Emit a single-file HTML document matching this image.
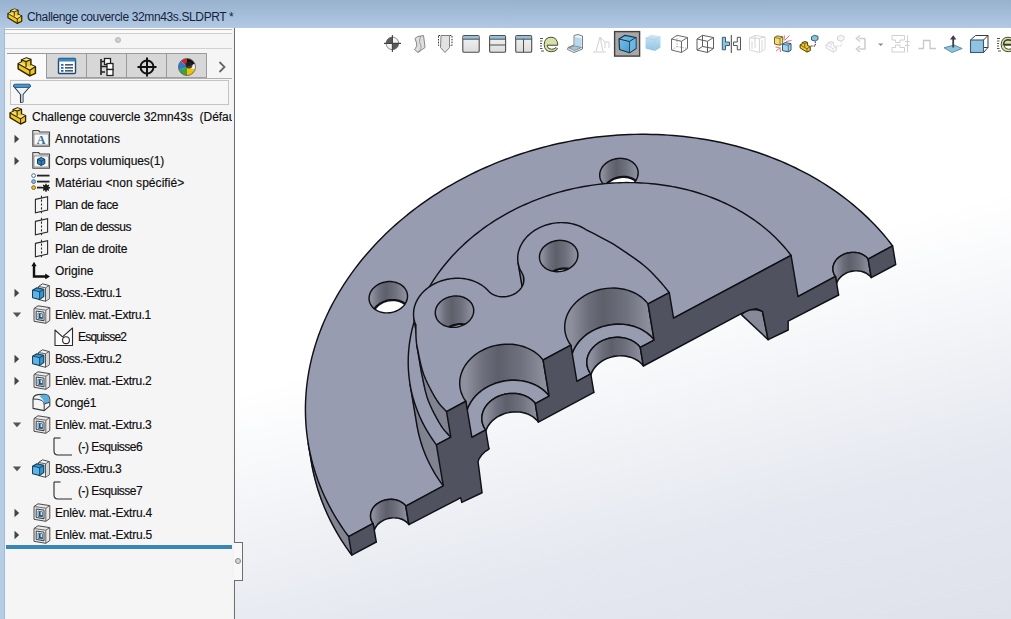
<!DOCTYPE html>
<html><head><meta charset="utf-8"><style>
*{margin:0;padding:0;box-sizing:border-box}
html,body{width:1011px;height:619px;overflow:hidden;background:#fff;font-family:"Liberation Sans", sans-serif}
.abs{position:absolute}
#title{position:absolute;left:0;top:0;width:1011px;height:28px;background:linear-gradient(to bottom,#98b1cd 0%,#a6bfdb 60%,#b3c9e3 100%)}
#title .t{position:absolute;left:27px;top:10px;font-size:12px;line-height:14px;color:#15233d;letter-spacing:-0.37px;white-space:nowrap}
#lstrip{position:absolute;left:0;top:28px;width:5px;height:591px;background:#b7cde6;border-right:1px solid #a4b9d3}
#panel{position:absolute;left:5px;top:29px;width:228px;height:590px;background:#f5f5f5;overflow:hidden}
#vp{position:absolute;left:235px;top:28px;width:776px;height:591px;background:linear-gradient(165.5deg,#ffffff 0%,#ffffff 46%,#f8f9fb 55%,#eff1f5 66%,#e5e8f0 79%,#dfe2eb 100%)}
.tx{position:absolute;font-size:12px;line-height:15px;color:#0c0c0c;white-space:nowrap;-webkit-text-stroke:0.15px #0c0c0c}
.ic{position:absolute;line-height:0}
.ic svg{display:block}
</style></head><body>
<div id="title"><div class="t">Challenge couvercle 32mn43s.SLDPRT *</div>
<div class="ic" style="left:7px;top:7.5px"><svg width="16" height="16.5" viewBox="1 1.2 19 19"><path d="M2.1 7.5 L5.3 6 L5.3 3.9 L10 2.1 L14.2 3.6 L14.2 8.6 L18.5 10.3 L18.5 16.7 L13.2 19.2 L2.1 12.4 Z" fill="#f0c820" stroke="#2e2400" stroke-width="1.4" stroke-linejoin="round"/><path d="M2.6 7.6 L5.3 6.2 L9.6 8.6 L13.2 10.9 L14.2 8.8 L18.2 10.4 L13.2 13.6 Z" fill="#f7e07a"/><path d="M5.6 4 L10 2.4 L14 3.7 L9.6 5.4 Z" fill="#f9e9a0"/><path d="M2.1 7.5 L13.2 13.8 L18.5 10.3 M13.2 13.8 L13.2 19.2 M5.3 3.9 L9.6 5.5 L14.2 3.6 M9.6 5.5 L9.6 10.8" fill="none" stroke="#2e2400" stroke-width="1.1"/></svg></div></div>
<div id="lstrip"></div>
<div id="vp"></div>
<div id="panel">
 <div class="abs" style="left:0;top:-1px;width:227px;height:2px;background:#b9b9b9"></div>
 <div class="abs" style="left:0;top:1px;width:227px;height:4px;background:#fafafa;border-bottom:1px solid #cfcfcf"></div>
 <div class="abs" style="left:0;top:19px;width:227px;height:1px;background:#d2d2d2"></div>
 <div class="abs" style="left:110px;top:8px;width:6px;height:6px;border-radius:50%;background:#d0d0d0;border:1px solid #b5b5b5"></div>
 <div class="abs" style="left:2px;top:25px;width:39px;height:25px;background:#fafafa"></div>
 <div class="abs" style="left:2px;top:24px;width:200px;height:1px;background:#9a9a9a"></div>
 <div class="abs" style="left:41px;top:24px;width:161px;height:25px;background:#d7d7d7;border-top:1px solid #9a9a9a;border-left:1px solid #9a9a9a;border-bottom:1px solid #a0a0a0"></div>
 <div class="abs" style="left:81px;top:25px;width:1px;height:24px;background:#9a9a9a"></div>
 <div class="abs" style="left:121px;top:25px;width:1px;height:24px;background:#9a9a9a"></div>
 <div class="abs" style="left:161px;top:25px;width:1px;height:24px;background:#9a9a9a"></div>
 <div class="abs" style="left:201px;top:25px;width:1px;height:24px;background:#9a9a9a"></div>
 <div class="abs" style="left:41px;top:49px;width:186px;height:1px;background:#b0b0b0"></div>
 <div class="abs" style="left:5px;top:51px;width:219px;height:25px;background:#f7f7f7;border:1px solid #c4c4c4"></div>
 
 <div class="ic" style="left:12px;top:28px"><svg width="20" height="20" viewBox="1 1.2 19 19"><path d="M2.1 7.5 L5.3 6 L5.3 3.9 L10 2.1 L14.2 3.6 L14.2 8.6 L18.5 10.3 L18.5 16.7 L13.2 19.2 L2.1 12.4 Z" fill="#f0c820" stroke="#2e2400" stroke-width="1.4" stroke-linejoin="round"/><path d="M2.6 7.6 L5.3 6.2 L9.6 8.6 L13.2 10.9 L14.2 8.8 L18.2 10.4 L13.2 13.6 Z" fill="#f7e07a"/><path d="M5.6 4 L10 2.4 L14 3.7 L9.6 5.4 Z" fill="#f9e9a0"/><path d="M2.1 7.5 L13.2 13.8 L18.5 10.3 M13.2 13.8 L13.2 19.2 M5.3 3.9 L9.6 5.5 L14.2 3.6 M9.6 5.5 L9.6 10.8" fill="none" stroke="#2e2400" stroke-width="1.1"/></svg></div>
 <div class="ic" style="left:52px;top:28px"><svg width="20" height="18" viewBox="0 0 20 18"><rect x="1.5" y="1.5" width="17" height="15" rx="1" fill="#fff" stroke="#1d4a78" stroke-width="1.4"/><rect x="1.5" y="1.5" width="17" height="3" fill="#3a86c0"/><rect x="4" y="7" width="2.5" height="1.8" fill="#2a6aa8"/><rect x="8" y="7.2" width="8" height="1.3" fill="#1d3550"/><rect x="4" y="10" width="2.5" height="1.8" fill="#2a6aa8"/><rect x="8" y="10.2" width="8" height="1.3" fill="#1d3550"/><rect x="4" y="13" width="2.5" height="1.8" fill="#2a6aa8"/><rect x="8" y="13.2" width="8" height="1.3" fill="#1d3550"/></svg></div>
 <div class="ic" style="left:93px;top:28px"><svg width="18" height="20" viewBox="0 0 18 20"><path d="M3 2 L3 18 M3 4.5 L7 4.5 M3 15 L7 15 M3 9.5 L9 9.5" stroke="#222" stroke-width="1.6" fill="none"/><rect x="6.5" y="1.5" width="6" height="6" fill="#fff" stroke="#222" stroke-width="1.3"/><rect x="9" y="6.5" width="6" height="6" fill="#fff" stroke="#222" stroke-width="1.3"/><rect x="9" y="12.5" width="6" height="6" fill="#fff" stroke="#222" stroke-width="1.3"/></svg></div>
 <div class="ic" style="left:131px;top:27px"><svg width="22" height="22" viewBox="0 0 22 22"><circle cx="11" cy="11" r="6.5" fill="none" stroke="#111" stroke-width="2"/><path d="M11 1.5 L11 20.5 M1.5 11 L20.5 11" stroke="#111" stroke-width="2"/></svg></div>
 <div class="ic" style="left:172px;top:28px"><svg width="20" height="20" viewBox="0 0 20 20"><defs><clipPath id="ball"><circle cx="10" cy="10" r="8.5"/></clipPath></defs><g clip-path="url(#ball)"><rect x="0" y="0" width="20" height="20" fill="#e8e8e8"/><path d="M10 10 L0 0 L10 0 Z" fill="#d2232a"/><path d="M10 10 L10 0 L20 0 L20 6 Z" fill="#111"/><path d="M10 10 L20 6 L20 20 Z" fill="#f3f3f3"/><path d="M10 10 L0 0 L0 14 Z" fill="#2b7ad6"/><path d="M10 10 L0 14 L0 20 L10 20 Z" fill="#3aa33a"/><path d="M10 10 L10 20 L20 20 L20 13 Z" fill="#f2c200"/><circle cx="12" cy="8" r="3.5" fill="#222" opacity="0.85"/></g><circle cx="10" cy="10" r="8.5" fill="none" stroke="#555" stroke-width="0.8"/></svg></div>
 <div class="ic" style="left:212px;top:31px"><svg width="10" height="14" viewBox="0 0 10 14"><path d="M2.5 2 L7.5 7 L2.5 12" fill="none" stroke="#666" stroke-width="1.8"/></svg></div>
 <div class="ic" style="left:7px;top:53px"><svg width="20" height="22" viewBox="0 0 20 22"><path d="M1.5 4 L18.5 4 L11 12.5 L11 20 L8.5 20.5 L8.5 12.5 Z" fill="#eef2f6" stroke="#2a3a48" stroke-width="1.1" stroke-linejoin="round"/><path d="M9 12.5 L9 20 L10.5 20 L10.5 12.5 Z" fill="#c8ccd0"/><rect x="1.5" y="2.2" width="17" height="3.2" rx="1.6" fill="#4a9ad0" stroke="#1d4a78" stroke-width="0.9"/></svg></div>

</div>
<div class="abs" style="left:0;top:0;width:232px;height:619px;overflow:hidden">
<div class="tx" style="left:32px;top:110px;letter-spacing:-0.02px">Challenge couvercle 32mn43s&nbsp; (Défaut</div>
<div class="ic" style="left:9px;top:107px"><svg width="18" height="18" viewBox="1 1.2 19 19"><path d="M2.1 7.5 L5.3 6 L5.3 3.9 L10 2.1 L14.2 3.6 L14.2 8.6 L18.5 10.3 L18.5 16.7 L13.2 19.2 L2.1 12.4 Z" fill="#f0c820" stroke="#2e2400" stroke-width="1.4" stroke-linejoin="round"/><path d="M2.6 7.6 L5.3 6.2 L9.6 8.6 L13.2 10.9 L14.2 8.8 L18.2 10.4 L13.2 13.6 Z" fill="#f7e07a"/><path d="M5.6 4 L10 2.4 L14 3.7 L9.6 5.4 Z" fill="#f9e9a0"/><path d="M2.1 7.5 L13.2 13.8 L18.5 10.3 M13.2 13.8 L13.2 19.2 M5.3 3.9 L9.6 5.5 L14.2 3.6 M9.6 5.5 L9.6 10.8" fill="none" stroke="#2e2400" stroke-width="1.1"/></svg></div>
<div class="tx" style="left:55px;top:132px;letter-spacing:0.16px">Annotations</div>
<div class="ic" style="left:32px;top:129px"><svg width="19" height="18" viewBox="0 0 19 18"><path d="M0.8 1.5 L6.5 1.5 L8 3 L17.5 3 L17.5 17.2 L0.8 17.2 Z" fill="#dcdcdc" stroke="#4a4a4a" stroke-width="1.1" stroke-linejoin="round"/><rect x="2" y="5" width="14.3" height="11" fill="#f7f9fb" stroke="#7a7a7a" stroke-width="0.7"/><text x="9.2" y="15" font-family="Liberation Serif" font-size="12" font-weight="bold" fill="#3a6a94" text-anchor="middle">A</text></svg></div>
<div class="ic" style="left:13px;top:134px"><svg width="8" height="10" viewBox="0 0 8 10"><path d="M1.5 0.8 L6.2 5 L1.5 9.2 Z" fill="#444"/></svg></div>
<div class="tx" style="left:55px;top:154px;letter-spacing:-0.08px">Corps volumiques(1)</div>
<div class="ic" style="left:32px;top:151px"><svg width="19" height="18" viewBox="0 0 19 18"><path d="M0.8 1.5 L6.5 1.5 L8 3 L17.5 3 L17.5 17.2 L0.8 17.2 Z" fill="#dcdcdc" stroke="#4a4a4a" stroke-width="1.1" stroke-linejoin="round"/><rect x="2" y="5" width="14.3" height="11" fill="#f7f9fb" stroke="#7a7a7a" stroke-width="0.7"/><path d="M5.5 8.3 L9.2 6.5 L12.8 8.3 L12.8 12.6 L9.2 14.5 L5.5 12.6 Z" fill="#2a88be" stroke="#173650" stroke-width="1"/><path d="M5.5 8.3 L9.2 10.1 L12.8 8.3 M9.2 10.1 L9.2 14.5" fill="none" stroke="#173650" stroke-width="0.8"/></svg></div>
<div class="ic" style="left:13px;top:156px"><svg width="8" height="10" viewBox="0 0 8 10"><path d="M1.5 0.8 L6.2 5 L1.5 9.2 Z" fill="#444"/></svg></div>
<div class="tx" style="left:55px;top:176px;letter-spacing:0.05px">Matériau &lt;non spécifié&gt;</div>
<div class="ic" style="left:31px;top:173px"><svg width="20" height="19" viewBox="0 0 20 19"><circle cx="2.6" cy="2.6" r="1.9" fill="#fff" stroke="#355f8a" stroke-width="0.9"/><rect x="6" y="1.7" width="12.5" height="1.8" fill="#222"/><circle cx="2.6" cy="8.6" r="1.9" fill="#8fbde6" stroke="#355f8a" stroke-width="0.9"/><rect x="6" y="7.7" width="12.5" height="1.8" fill="#222"/><circle cx="2.6" cy="14.6" r="1.9" fill="#f0c030" stroke="#7a5a00" stroke-width="0.9"/><rect x="6" y="13.7" width="5" height="1.8" fill="#222"/><circle cx="15" cy="14.8" r="2.7" fill="#1a1a1a"/><circle cx="15" cy="14.8" r="0.9" fill="#f5f5f5"/><path d="M15 10.8 L15 18.8 M11 14.8 L19 14.8 M12.2 12 L17.8 17.6 M17.8 12 L12.2 17.6" stroke="#1a1a1a" stroke-width="1.4"/></svg></div>
<div class="tx" style="left:55px;top:198px;letter-spacing:-0.29px">Plan de face</div>
<div class="ic" style="left:32px;top:195px"><svg width="18" height="19" viewBox="0 0 18 19"><path d="M3.4 4.4 L15.6 1.6 L15.6 15 L3.4 17.9 Z" fill="none" stroke="#2a2a2a" stroke-width="1.1"/><path d="M9.5 0.8 L9.5 18.6" stroke="#2a2a2a" stroke-width="1.1" stroke-dasharray="2.2 1.6"/></svg></div>
<div class="tx" style="left:55px;top:220px;letter-spacing:-0.42px">Plan de dessus</div>
<div class="ic" style="left:32px;top:217px"><svg width="18" height="19" viewBox="0 0 18 19"><path d="M3.4 4.4 L15.6 1.6 L15.6 15 L3.4 17.9 Z" fill="none" stroke="#2a2a2a" stroke-width="1.1"/><path d="M9.5 0.8 L9.5 18.6" stroke="#2a2a2a" stroke-width="1.1" stroke-dasharray="2.2 1.6"/></svg></div>
<div class="tx" style="left:55px;top:242px;letter-spacing:-0.12px">Plan de droite</div>
<div class="ic" style="left:32px;top:239px"><svg width="18" height="19" viewBox="0 0 18 19"><path d="M3.4 4.4 L15.6 1.6 L15.6 15 L3.4 17.9 Z" fill="none" stroke="#2a2a2a" stroke-width="1.1"/><path d="M9.5 0.8 L9.5 18.6" stroke="#2a2a2a" stroke-width="1.1" stroke-dasharray="2.2 1.6"/></svg></div>
<div class="tx" style="left:55px;top:264px;letter-spacing:-0.03px">Origine</div>
<div class="ic" style="left:31px;top:261px"><svg width="20" height="18" viewBox="0 0 20 18"><path d="M3 4 L3 15.5 L15.5 15.5" fill="none" stroke="#111" stroke-width="2.4"/><path d="M0.4 5.2 L3 0.8 L5.6 5.2 Z M14.2 12.6 L19 15.5 L14.2 18.4 Z" fill="#111"/></svg></div>
<div class="tx" style="left:55px;top:286px;letter-spacing:-0.45px">Boss.-Extru.1</div>
<div class="ic" style="left:32px;top:283px"><svg width="19" height="19" viewBox="0 0 19 19"><path d="M6.5 3.5 L10.5 0.8 L17.3 2.6 L17.3 15.8 L13.5 18.3 L6.5 16.5 Z" fill="#f3f3f3" stroke="#4a4a4a" stroke-width="1"/><path d="M13.5 4.8 L13.5 18.3 M6.5 3.5 L13.5 4.8 L17.3 2.6" fill="none" stroke="#4a4a4a" stroke-width="0.9"/><path d="M14 5.3 L16.8 3.4 L16.8 15.5 L14 17.5 Z" fill="#d8d8d8"/><path d="M0.6 7.2 L4.8 4.8 L11.8 6.3 L11.8 13.6 L7.6 16.4 L0.6 14.6 Z" fill="#2e98d2" stroke="#183a55" stroke-width="1.1" stroke-linejoin="round"/><path d="M0.6 7.2 L7.6 8.8 L11.8 6.3 M7.6 8.8 L7.6 16.4" fill="none" stroke="#183a55" stroke-width="0.9"/><path d="M1.1 7.8 L7.1 9.2 L7.1 15.7 L1.1 14.2 Z" fill="#5bb6e6"/></svg></div>
<div class="ic" style="left:13px;top:288px"><svg width="8" height="10" viewBox="0 0 8 10"><path d="M1.5 0.8 L6.2 5 L1.5 9.2 Z" fill="#444"/></svg></div>
<div class="tx" style="left:55px;top:308px;letter-spacing:-0.28px">Enlèv. mat.-Extru.1</div>
<div class="ic" style="left:33px;top:305px"><svg width="18" height="19" viewBox="0 0 18 19"><path d="M1 3.5 L5 0.8 L16.8 2.6 L16.8 15.5 L12.8 18.3 L1 16.3 Z" fill="#e9e9e9" stroke="#4a4a4a" stroke-width="1"/><path d="M1 3.5 L12.8 5.2 L16.8 2.6 M12.8 5.2 L12.8 18.3" fill="none" stroke="#5a5a5a" stroke-width="0.9"/><path d="M3.2 6 L11 7.2 L11 15.8 L3.2 14.4 Z" fill="#fbfbfb" stroke="#3a3a3a" stroke-width="1"/><path d="M5 8 L9.5 8.8 L9.5 14.2 L5 13.4 Z" fill="#cfe6f4" stroke="#2a6aa0" stroke-width="0.8"/><path d="M6.8 8.6 L6.8 12.6 L9.3 13" fill="none" stroke="#173a60" stroke-width="1.4"/></svg></div>
<div class="ic" style="left:12px;top:311px"><svg width="10" height="8" viewBox="0 0 10 8"><path d="M0.8 1.5 L9.2 1.5 L5 6.2 Z" fill="#555"/></svg></div>
<div class="tx" style="left:78px;top:330px;letter-spacing:-0.80px">Esquisse2</div>
<div class="ic" style="left:54px;top:327px"><svg width="20" height="19" viewBox="0 0 20 19"><path d="M1 3 L8.5 9.8 L18.5 1 L18.5 18.5 L1 18.5 Z" fill="#fff" stroke="#2a2a2a" stroke-width="1.1" stroke-linejoin="round"/><circle cx="12" cy="13.2" r="3.4" fill="#fff" stroke="#2a2a2a" stroke-width="1.1"/></svg></div>
<div class="tx" style="left:55px;top:352px;letter-spacing:-0.45px">Boss.-Extru.2</div>
<div class="ic" style="left:32px;top:349px"><svg width="19" height="19" viewBox="0 0 19 19"><path d="M6.5 3.5 L10.5 0.8 L17.3 2.6 L17.3 15.8 L13.5 18.3 L6.5 16.5 Z" fill="#f3f3f3" stroke="#4a4a4a" stroke-width="1"/><path d="M13.5 4.8 L13.5 18.3 M6.5 3.5 L13.5 4.8 L17.3 2.6" fill="none" stroke="#4a4a4a" stroke-width="0.9"/><path d="M14 5.3 L16.8 3.4 L16.8 15.5 L14 17.5 Z" fill="#d8d8d8"/><path d="M0.6 7.2 L4.8 4.8 L11.8 6.3 L11.8 13.6 L7.6 16.4 L0.6 14.6 Z" fill="#2e98d2" stroke="#183a55" stroke-width="1.1" stroke-linejoin="round"/><path d="M0.6 7.2 L7.6 8.8 L11.8 6.3 M7.6 8.8 L7.6 16.4" fill="none" stroke="#183a55" stroke-width="0.9"/><path d="M1.1 7.8 L7.1 9.2 L7.1 15.7 L1.1 14.2 Z" fill="#5bb6e6"/></svg></div>
<div class="ic" style="left:13px;top:354px"><svg width="8" height="10" viewBox="0 0 8 10"><path d="M1.5 0.8 L6.2 5 L1.5 9.2 Z" fill="#444"/></svg></div>
<div class="tx" style="left:55px;top:374px;letter-spacing:-0.25px">Enlèv. mat.-Extru.2</div>
<div class="ic" style="left:33px;top:371px"><svg width="18" height="19" viewBox="0 0 18 19"><path d="M1 3.5 L5 0.8 L16.8 2.6 L16.8 15.5 L12.8 18.3 L1 16.3 Z" fill="#e9e9e9" stroke="#4a4a4a" stroke-width="1"/><path d="M1 3.5 L12.8 5.2 L16.8 2.6 M12.8 5.2 L12.8 18.3" fill="none" stroke="#5a5a5a" stroke-width="0.9"/><path d="M3.2 6 L11 7.2 L11 15.8 L3.2 14.4 Z" fill="#fbfbfb" stroke="#3a3a3a" stroke-width="1"/><path d="M5 8 L9.5 8.8 L9.5 14.2 L5 13.4 Z" fill="#cfe6f4" stroke="#2a6aa0" stroke-width="0.8"/><path d="M6.8 8.6 L6.8 12.6 L9.3 13" fill="none" stroke="#173a60" stroke-width="1.4"/></svg></div>
<div class="ic" style="left:13px;top:376px"><svg width="8" height="10" viewBox="0 0 8 10"><path d="M1.5 0.8 L6.2 5 L1.5 9.2 Z" fill="#444"/></svg></div>
<div class="tx" style="left:55px;top:396px;letter-spacing:-0.10px">Congé1</div>
<div class="ic" style="left:32px;top:393px"><svg width="19" height="19" viewBox="0 0 19 19"><path d="M1 6 Q1.5 2.2 6 1.6 L12.5 1.2 Q17.3 1.6 17.8 6.2 L17.8 12.8 L12.2 17.6 L1 15.4 Z" fill="#f2f4f6" stroke="#3a3a3a" stroke-width="1.1" stroke-linejoin="round"/><path d="M7.5 3.2 Q8.5 1.8 12.5 1.6 Q16.8 1.9 17.4 6 L17.4 9 L12.4 10.8 Q12.2 6.5 7.5 3.2 Z" fill="#5aaee0"/><path d="M1 6 Q6.5 5.8 10 7.5 Q12.2 9 12.2 12 L12.2 17.6 M12.2 11 L17.8 9.2" fill="none" stroke="#3a3a3a" stroke-width="1"/></svg></div>
<div class="tx" style="left:55px;top:418px;letter-spacing:-0.25px">Enlèv. mat.-Extru.3</div>
<div class="ic" style="left:33px;top:415px"><svg width="18" height="19" viewBox="0 0 18 19"><path d="M1 3.5 L5 0.8 L16.8 2.6 L16.8 15.5 L12.8 18.3 L1 16.3 Z" fill="#e9e9e9" stroke="#4a4a4a" stroke-width="1"/><path d="M1 3.5 L12.8 5.2 L16.8 2.6 M12.8 5.2 L12.8 18.3" fill="none" stroke="#5a5a5a" stroke-width="0.9"/><path d="M3.2 6 L11 7.2 L11 15.8 L3.2 14.4 Z" fill="#fbfbfb" stroke="#3a3a3a" stroke-width="1"/><path d="M5 8 L9.5 8.8 L9.5 14.2 L5 13.4 Z" fill="#cfe6f4" stroke="#2a6aa0" stroke-width="0.8"/><path d="M6.8 8.6 L6.8 12.6 L9.3 13" fill="none" stroke="#173a60" stroke-width="1.4"/></svg></div>
<div class="ic" style="left:12px;top:421px"><svg width="10" height="8" viewBox="0 0 10 8"><path d="M0.8 1.5 L9.2 1.5 L5 6.2 Z" fill="#555"/></svg></div>
<div class="tx" style="left:78px;top:440px;letter-spacing:-0.50px">(-) Esquisse6</div>
<div class="ic" style="left:53px;top:437px"><svg width="20" height="19" viewBox="0 0 20 19"><path d="M1 1 L1 14 Q1 18 5 18 L19 18" fill="none" stroke="#2a2a2a" stroke-width="1.1"/><path d="M1 1 L7.5 1" fill="none" stroke="#2a2a2a" stroke-width="1.1"/></svg></div>
<div class="tx" style="left:55px;top:462px;letter-spacing:-0.45px">Boss.-Extru.3</div>
<div class="ic" style="left:32px;top:459px"><svg width="19" height="19" viewBox="0 0 19 19"><path d="M6.5 3.5 L10.5 0.8 L17.3 2.6 L17.3 15.8 L13.5 18.3 L6.5 16.5 Z" fill="#f3f3f3" stroke="#4a4a4a" stroke-width="1"/><path d="M13.5 4.8 L13.5 18.3 M6.5 3.5 L13.5 4.8 L17.3 2.6" fill="none" stroke="#4a4a4a" stroke-width="0.9"/><path d="M14 5.3 L16.8 3.4 L16.8 15.5 L14 17.5 Z" fill="#d8d8d8"/><path d="M0.6 7.2 L4.8 4.8 L11.8 6.3 L11.8 13.6 L7.6 16.4 L0.6 14.6 Z" fill="#2e98d2" stroke="#183a55" stroke-width="1.1" stroke-linejoin="round"/><path d="M0.6 7.2 L7.6 8.8 L11.8 6.3 M7.6 8.8 L7.6 16.4" fill="none" stroke="#183a55" stroke-width="0.9"/><path d="M1.1 7.8 L7.1 9.2 L7.1 15.7 L1.1 14.2 Z" fill="#5bb6e6"/></svg></div>
<div class="ic" style="left:12px;top:465px"><svg width="10" height="8" viewBox="0 0 10 8"><path d="M0.8 1.5 L9.2 1.5 L5 6.2 Z" fill="#555"/></svg></div>
<div class="tx" style="left:78px;top:484px;letter-spacing:-0.50px">(-) Esquisse7</div>
<div class="ic" style="left:53px;top:481px"><svg width="20" height="19" viewBox="0 0 20 19"><path d="M1 1 L1 14 Q1 18 5 18 L19 18" fill="none" stroke="#2a2a2a" stroke-width="1.1"/><path d="M1 1 L7.5 1" fill="none" stroke="#2a2a2a" stroke-width="1.1"/></svg></div>
<div class="tx" style="left:55px;top:506px;letter-spacing:-0.22px">Enlèv. mat.-Extru.4</div>
<div class="ic" style="left:33px;top:503px"><svg width="18" height="19" viewBox="0 0 18 19"><path d="M1 3.5 L5 0.8 L16.8 2.6 L16.8 15.5 L12.8 18.3 L1 16.3 Z" fill="#e9e9e9" stroke="#4a4a4a" stroke-width="1"/><path d="M1 3.5 L12.8 5.2 L16.8 2.6 M12.8 5.2 L12.8 18.3" fill="none" stroke="#5a5a5a" stroke-width="0.9"/><path d="M3.2 6 L11 7.2 L11 15.8 L3.2 14.4 Z" fill="#fbfbfb" stroke="#3a3a3a" stroke-width="1"/><path d="M5 8 L9.5 8.8 L9.5 14.2 L5 13.4 Z" fill="#cfe6f4" stroke="#2a6aa0" stroke-width="0.8"/><path d="M6.8 8.6 L6.8 12.6 L9.3 13" fill="none" stroke="#173a60" stroke-width="1.4"/></svg></div>
<div class="ic" style="left:13px;top:508px"><svg width="8" height="10" viewBox="0 0 8 10"><path d="M1.5 0.8 L6.2 5 L1.5 9.2 Z" fill="#444"/></svg></div>
<div class="tx" style="left:55px;top:528px;letter-spacing:-0.22px">Enlèv. mat.-Extru.5</div>
<div class="ic" style="left:33px;top:525px"><svg width="18" height="19" viewBox="0 0 18 19"><path d="M1 3.5 L5 0.8 L16.8 2.6 L16.8 15.5 L12.8 18.3 L1 16.3 Z" fill="#e9e9e9" stroke="#4a4a4a" stroke-width="1"/><path d="M1 3.5 L12.8 5.2 L16.8 2.6 M12.8 5.2 L12.8 18.3" fill="none" stroke="#5a5a5a" stroke-width="0.9"/><path d="M3.2 6 L11 7.2 L11 15.8 L3.2 14.4 Z" fill="#fbfbfb" stroke="#3a3a3a" stroke-width="1"/><path d="M5 8 L9.5 8.8 L9.5 14.2 L5 13.4 Z" fill="#cfe6f4" stroke="#2a6aa0" stroke-width="0.8"/><path d="M6.8 8.6 L6.8 12.6 L9.3 13" fill="none" stroke="#173a60" stroke-width="1.4"/></svg></div>
<div class="ic" style="left:13px;top:530px"><svg width="8" height="10" viewBox="0 0 8 10"><path d="M1.5 0.8 L6.2 5 L1.5 9.2 Z" fill="#444"/></svg></div>
</div>
<div class="abs" style="left:6px;top:545px;width:226px;height:4px;background:#3b86b8"></div>
<div class="abs" style="left:232px;top:28px;width:2px;height:591px;background:#f3f3f3"></div><div class="abs" style="left:234px;top:28px;width:1px;height:591px;background:#6e6e6e"></div>
<div class="abs" style="left:234px;top:542px;width:9px;height:39px;background:#f8f8f8;border:1px solid #6e6e6e;border-left:none"></div>
<div class="abs" style="left:235px;top:558px;width:6px;height:6px;border-radius:50%;background:#d4d4d4;border:1px solid #8a8a8a"></div>
<svg class="abs" style="left:0;top:0" width="1011" height="619" viewBox="0 0 1011 619">
<defs><linearGradient id="bg" gradientUnits="userSpaceOnUse" x1="527.2" y1="-46.6" x2="718.8" y2="694.6"><stop offset="0" stop-color="#ffffff"/><stop offset="0.46" stop-color="#ffffff"/><stop offset="0.55" stop-color="#f8f9fb"/><stop offset="0.66" stop-color="#eff1f5"/><stop offset="0.79" stop-color="#e5e8f0"/><stop offset="1" stop-color="#dfe2eb"/></linearGradient>
<linearGradient id="holeg_bh0" gradientUnits="userSpaceOnUse" x1="602.3" y1="0" x2="635.5" y2="0"><stop offset="0" stop-color="#8e909e"/><stop offset="0.22" stop-color="#6d6f7c"/><stop offset="0.42" stop-color="#5d5f6b"/><stop offset="0.72" stop-color="#6f717e"/><stop offset="1" stop-color="#8c8e9c"/></linearGradient>
<linearGradient id="holeg_bh1" gradientUnits="userSpaceOnUse" x1="371.7" y1="0" x2="404.9" y2="0"><stop offset="0" stop-color="#8e909e"/><stop offset="0.22" stop-color="#6d6f7c"/><stop offset="0.42" stop-color="#5d5f6b"/><stop offset="0.72" stop-color="#6f717e"/><stop offset="1" stop-color="#8c8e9c"/></linearGradient>
<linearGradient id="holeg_sl0" gradientUnits="userSpaceOnUse" x1="373.1" y1="0" x2="405.8" y2="0"><stop offset="0" stop-color="#8e909e"/><stop offset="0.22" stop-color="#6d6f7c"/><stop offset="0.42" stop-color="#5d5f6b"/><stop offset="0.72" stop-color="#6f717e"/><stop offset="1" stop-color="#8c8e9c"/></linearGradient>
<linearGradient id="holeg_sl1" gradientUnits="userSpaceOnUse" x1="835.5" y1="0" x2="868.1" y2="0"><stop offset="0" stop-color="#8e909e"/><stop offset="0.22" stop-color="#6d6f7c"/><stop offset="0.42" stop-color="#5d5f6b"/><stop offset="0.72" stop-color="#6f717e"/><stop offset="1" stop-color="#8c8e9c"/></linearGradient>
<linearGradient id="holeg_sh0" gradientUnits="userSpaceOnUse" x1="437.9" y1="0" x2="471.1" y2="0"><stop offset="0" stop-color="#8e909e"/><stop offset="0.22" stop-color="#6d6f7c"/><stop offset="0.42" stop-color="#5d5f6b"/><stop offset="0.72" stop-color="#6f717e"/><stop offset="1" stop-color="#8c8e9c"/></linearGradient>
<linearGradient id="holeg_sh1" gradientUnits="userSpaceOnUse" x1="542.1" y1="0" x2="575.3" y2="0"><stop offset="0" stop-color="#8e909e"/><stop offset="0.22" stop-color="#6d6f7c"/><stop offset="0.42" stop-color="#5d5f6b"/><stop offset="0.72" stop-color="#6f717e"/><stop offset="1" stop-color="#8c8e9c"/></linearGradient>
<linearGradient id="holeg_cu0" gradientUnits="userSpaceOnUse" x1="465.8" y1="0" x2="543.1" y2="0"><stop offset="0" stop-color="#8e909e"/><stop offset="0.22" stop-color="#6d6f7c"/><stop offset="0.42" stop-color="#5d5f6b"/><stop offset="0.72" stop-color="#6f717e"/><stop offset="1" stop-color="#8c8e9c"/></linearGradient>
<linearGradient id="holeg_ct0" gradientUnits="userSpaceOnUse" x1="485.8" y1="0" x2="535.3" y2="0"><stop offset="0" stop-color="#8e909e"/><stop offset="0.22" stop-color="#6d6f7c"/><stop offset="0.42" stop-color="#5d5f6b"/><stop offset="0.72" stop-color="#6f717e"/><stop offset="1" stop-color="#8c8e9c"/></linearGradient>
<linearGradient id="holeg_cu1" gradientUnits="userSpaceOnUse" x1="570.8" y1="0" x2="648.1" y2="0"><stop offset="0" stop-color="#8e909e"/><stop offset="0.22" stop-color="#6d6f7c"/><stop offset="0.42" stop-color="#5d5f6b"/><stop offset="0.72" stop-color="#6f717e"/><stop offset="1" stop-color="#8c8e9c"/></linearGradient>
<linearGradient id="holeg_ct1" gradientUnits="userSpaceOnUse" x1="590.8" y1="0" x2="640.3" y2="0"><stop offset="0" stop-color="#8e909e"/><stop offset="0.22" stop-color="#6d6f7c"/><stop offset="0.42" stop-color="#5d5f6b"/><stop offset="0.72" stop-color="#6f717e"/><stop offset="1" stop-color="#8c8e9c"/></linearGradient></defs>
<path d="M308.01 442.18 L308.76 446.57 L311.87 465.10 L311.12 460.71 Z" fill="#7a7c8a" stroke="#7a7c8a" stroke-width="0.7"/>
<path d="M308.76 446.57 L309.61 450.94 L312.72 469.47 L311.87 465.10 Z" fill="#7b7d8a" stroke="#7b7d8a" stroke-width="0.7"/>
<path d="M309.61 450.94 L310.55 455.29 L313.66 473.82 L312.72 469.47 Z" fill="#7c7d8b" stroke="#7c7d8b" stroke-width="0.7"/>
<path d="M310.55 455.29 L311.59 459.63 L314.70 478.16 L313.66 473.82 Z" fill="#7c7e8b" stroke="#7c7e8b" stroke-width="0.7"/>
<path d="M311.59 459.63 L312.72 463.94 L315.83 482.47 L314.70 478.16 Z" fill="#7d7f8c" stroke="#7d7f8c" stroke-width="0.7"/>
<path d="M312.72 463.94 L313.95 468.23 L317.06 486.76 L315.83 482.47 Z" fill="#7d7f8d" stroke="#7d7f8d" stroke-width="0.7"/>
<path d="M313.95 468.23 L315.26 472.49 L318.37 491.02 L317.06 486.76 Z" fill="#7e808d" stroke="#7e808d" stroke-width="0.7"/>
<path d="M315.26 472.49 L316.68 476.74 L319.79 495.27 L318.37 491.02 Z" fill="#7e808e" stroke="#7e808e" stroke-width="0.7"/>
<path d="M316.68 476.74 L318.18 480.95 L321.29 499.48 L319.79 495.27 Z" fill="#7e808e" stroke="#7e808e" stroke-width="0.7"/>
<path d="M318.18 480.95 L319.78 485.14 L322.89 503.67 L321.29 499.48 Z" fill="#7f818f" stroke="#7f818f" stroke-width="0.7"/>
<path d="M319.78 485.14 L321.46 489.30 L324.57 507.83 L322.89 503.67 Z" fill="#7f818f" stroke="#7f818f" stroke-width="0.7"/>
<path d="M321.46 489.30 L323.24 493.43 L326.35 511.96 L324.57 507.83 Z" fill="#80828f" stroke="#80828f" stroke-width="0.7"/>
<path d="M323.24 493.43 L325.11 497.53 L328.22 516.06 L326.35 511.96 Z" fill="#808290" stroke="#808290" stroke-width="0.7"/>
<path d="M325.11 497.53 L327.07 501.60 L330.18 520.13 L328.22 516.06 Z" fill="#808290" stroke="#808290" stroke-width="0.7"/>
<path d="M327.07 501.60 L329.12 505.63 L332.23 524.16 L330.18 520.13 Z" fill="#808290" stroke="#808290" stroke-width="0.7"/>
<path d="M329.12 505.63 L331.26 509.63 L334.37 528.16 L332.23 524.16 Z" fill="#818391" stroke="#818391" stroke-width="0.7"/>
<path d="M331.26 509.63 L333.48 513.59 L336.59 532.12 L334.37 528.16 Z" fill="#818391" stroke="#818391" stroke-width="0.7"/>
<path d="M333.48 513.59 L335.80 517.51 L338.91 536.04 L336.59 532.12 Z" fill="#818391" stroke="#818391" stroke-width="0.7"/>
<path d="M335.80 517.51 L338.20 521.40 L341.31 539.93 L338.91 536.04 Z" fill="#818391" stroke="#818391" stroke-width="0.7"/>
<path d="M338.20 521.40 L340.68 525.25 L343.79 543.78 L341.31 539.93 Z" fill="#818391" stroke="#818391" stroke-width="0.7"/>
<path d="M340.68 525.25 L343.25 529.05 L346.36 547.58 L343.79 543.78 Z" fill="#818391" stroke="#818391" stroke-width="0.7"/>
<path d="M343.25 529.05 L345.91 532.82 L349.02 551.35 L346.36 547.58 Z" fill="#818392" stroke="#818392" stroke-width="0.7"/>
<path d="M345.91 532.82 L348.65 536.54 L351.76 555.07 L349.02 551.35 Z" fill="#818392" stroke="#818392" stroke-width="0.7"/>
<path d="M308.25 443.63 L311.36 462.16 L311.94 465.47 L312.58 468.78 L313.27 472.07 L314.02 475.35 L314.82 478.62 L315.67 481.88 L316.58 485.13 L317.54 488.36 L318.55 491.58 L319.62 494.79 L320.74 497.98 L321.91 501.15 L323.14 504.31 L324.42 507.45 L325.75 510.58 L327.13 513.69 L328.56 516.78 L330.05 519.85 L331.58 522.90 L333.17 525.94 L334.80 528.95 L336.49 531.94 L338.23 534.91 L340.01 537.86 L341.85 540.79 L343.74 543.69 L345.67 546.57 L347.65 549.43 L349.68 552.26 L351.76 555.07 L351.76 555.07" fill="none" stroke="#101016" stroke-width="1.45" stroke-linejoin="round" stroke-linecap="round"/>
<path d="M892.62 245.97 L889.80 242.29 L886.89 238.66 L883.91 235.07 L880.84 231.54 L877.70 228.05 L874.47 224.61 L871.17 221.22 L867.80 217.89 L864.34 214.60 L860.82 211.37 L857.22 208.20 L853.55 205.08 L849.80 202.02 L845.99 199.01 L842.11 196.07 L838.16 193.18 L834.15 190.35 L830.07 187.59 L825.92 184.89 L821.72 182.25 L817.45 179.67 L813.12 177.16 L808.74 174.71 L804.29 172.33 L799.79 170.02 L795.24 167.77 L790.63 165.59 L785.98 163.48 L781.27 161.44 L776.51 159.47 L771.70 157.57 L766.85 155.74 L761.96 153.98 L757.02 152.30 L752.04 150.69 L747.01 149.15 L741.96 147.68 L736.86 146.29 L731.73 144.98 L726.56 143.74 L721.37 142.57 L716.14 141.48 L710.88 140.47 L705.59 139.53 L700.28 138.67 L694.95 137.88 L689.59 137.18 L684.21 136.55 L678.81 136.00 L673.40 135.52 L667.97 135.13 L662.52 134.81 L657.06 134.57 L651.59 134.41 L646.11 134.32 L640.63 134.32 L635.13 134.39 L629.63 134.54 L624.13 134.77 L618.63 135.08 L613.13 135.46 L607.63 135.93 L602.14 136.47 L596.65 137.09 L591.17 137.78 L585.69 138.56 L580.23 139.41 L574.78 140.33 L569.35 141.34 L563.93 142.42 L558.52 143.57 L553.14 144.80 L547.77 146.11 L542.43 147.49 L537.12 148.95 L531.82 150.48 L526.56 152.08 L521.32 153.75 L516.12 155.50 L510.94 157.32 L505.80 159.21 L500.70 161.17 L495.63 163.20 L490.59 165.30 L485.60 167.47 L480.65 169.71 L475.74 172.01 L470.88 174.39 L466.06 176.82 L461.29 179.33 L456.57 181.90 L451.90 184.53 L447.28 187.22 L442.71 189.98 L438.19 192.80 L433.73 195.68 L429.33 198.61 L424.99 201.61 L420.71 204.66 L416.48 207.78 L412.32 210.94 L408.23 214.17 L404.19 217.44 L400.23 220.77 L396.33 224.15 L392.50 227.58 L388.73 231.07 L385.04 234.60 L381.42 238.17 L377.88 241.80 L374.40 245.47 L371.01 249.18 L367.69 252.94 L364.44 256.74 L361.28 260.58 L358.19 264.46 L355.18 268.38 L352.25 272.34 L349.41 276.33 L346.65 280.36 L343.97 284.42 L341.37 288.52 L338.86 292.65 L336.44 296.80 L334.10 300.99 L331.85 305.20 L329.69 309.44 L327.62 313.70 L325.64 317.99 L323.74 322.30 L321.94 326.63 L320.23 330.98 L318.61 335.34 L317.08 339.73 L315.64 344.13 L314.30 348.55 L313.05 352.97 L311.89 357.41 L310.83 361.87 L309.86 366.32 L308.98 370.79 L308.21 375.26 L307.52 379.74 L306.93 384.22 L306.44 388.71 L306.05 393.19 L305.74 397.68 L305.54 402.16 L305.43 406.64 L305.42 411.11 L305.50 415.58 L305.68 420.04 L305.95 424.49 L306.32 428.93 L306.79 433.36 L307.35 437.78 L308.01 442.18 L308.76 446.57 L309.61 450.94 L310.55 455.29 L311.59 459.63 L312.72 463.94 L313.95 468.23 L315.26 472.49 L316.68 476.74 L318.18 480.95 L319.78 485.14 L321.46 489.30 L323.24 493.43 L325.11 497.53 L327.07 501.60 L329.12 505.63 L331.26 509.63 L333.48 513.59 L335.80 517.51 L338.20 521.40 L340.68 525.25 L343.25 529.05 L345.91 532.82 L348.65 536.54 L373.13 523.46 L372.22 522.08 L371.50 520.63 L370.97 519.10 L370.65 517.54 L370.53 515.94 L370.62 514.32 L370.92 512.71 L371.42 511.13 L372.12 509.58 L373.01 508.09 L374.08 506.67 L375.31 505.34 L376.70 504.12 L378.23 503.01 L379.89 502.03 L381.64 501.19 L383.49 500.49 L385.40 499.96 L387.35 499.58 L389.33 499.37 L391.30 499.33 L393.26 499.46 L395.18 499.76 L397.03 500.22 L398.80 500.84 L400.47 501.61 L402.01 502.52 L403.42 503.57 L404.68 504.75 L405.77 506.03 L835.50 276.48 L834.59 275.10 L833.87 273.64 L833.35 272.12 L833.02 270.55 L832.91 268.95 L833.00 267.34 L833.30 265.73 L833.80 264.14 L834.49 262.60 L835.38 261.11 L836.45 259.69 L837.68 258.36 L839.08 257.13 L840.61 256.02 L842.26 255.04 L844.02 254.20 L845.86 253.51 L847.77 252.97 L849.72 252.60 L851.70 252.39 L853.68 252.35 L855.64 252.48 L857.55 252.77 L859.40 253.23 L861.17 253.85 L862.84 254.62 L864.39 255.54 L865.80 256.59 L867.05 257.76 L868.14 259.04 Z" fill="#989cb0" stroke="#101016" stroke-width="1.45" stroke-linejoin="round"/>
<path d="M635.53 165.15 L634.81 164.27 L634.01 163.44 L633.14 162.66 L632.21 161.93 L631.20 161.27 L630.14 160.66 L629.02 160.12 L627.86 159.65 L626.65 159.25 L625.40 158.92 L624.12 158.66 L622.81 158.48 L621.49 158.37 L620.16 158.34 L618.81 158.39 L617.47 158.51 L616.14 158.71 L614.82 158.98 L613.52 159.33 L612.24 159.75 L611.00 160.23 L609.80 160.79 L608.64 161.41 L607.54 162.09 L606.48 162.82 L605.49 163.62 L604.57 164.46 L603.71 165.35 L602.93 166.28 L602.22 167.25 L601.60 168.25 L601.06 169.29 L600.61 170.34 L600.25 171.41 L599.98 172.50 L599.80 173.59 L599.72 174.68 L599.72 175.77 L599.83 176.85 L600.02 177.92 L600.31 178.97 L600.69 180.00 L601.15 180.99 L601.71 181.96 L602.34 182.88 L603.06 183.76 L603.86 184.59 L604.73 185.37 L605.67 186.10 L606.67 186.77 L607.73 187.37 L608.85 187.91 L610.02 188.38 L611.23 188.78 L612.47 189.11 L613.75 189.37 L615.06 189.55 L616.38 189.66 L617.72 189.69 L619.06 189.64 L620.40 189.52 L621.73 189.32 L623.05 189.05 L624.35 188.70 L625.63 188.29 L626.87 187.80 L628.07 187.25 L629.23 186.63 L630.34 185.95 L631.39 185.21 L632.38 184.42 L633.31 183.57 L634.16 182.68 L634.95 181.75 L635.65 180.78 L636.27 179.78 L636.81 178.75 L637.26 177.69 L637.62 176.62 L637.89 175.54 L638.07 174.44 L638.16 173.35 L638.15 172.26 L638.05 171.18 L637.85 170.11 L637.56 169.06 L637.19 168.04 L636.72 167.04 L636.16 166.08 L635.53 165.15 Z" fill="url(#holeg_bh0)" stroke="none"/>
<clipPath id="c_bh0"><path d="M635.53 165.15 L634.81 164.27 L634.01 163.44 L633.14 162.66 L632.21 161.93 L631.20 161.27 L630.14 160.66 L629.02 160.12 L627.86 159.65 L626.65 159.25 L625.40 158.92 L624.12 158.66 L622.81 158.48 L621.49 158.37 L620.16 158.34 L618.81 158.39 L617.47 158.51 L616.14 158.71 L614.82 158.98 L613.52 159.33 L612.24 159.75 L611.00 160.23 L609.80 160.79 L608.64 161.41 L607.54 162.09 L606.48 162.82 L605.49 163.62 L604.57 164.46 L603.71 165.35 L602.93 166.28 L602.22 167.25 L601.60 168.25 L601.06 169.29 L600.61 170.34 L600.25 171.41 L599.98 172.50 L599.80 173.59 L599.72 174.68 L599.72 175.77 L599.83 176.85 L600.02 177.92 L600.31 178.97 L600.69 180.00 L601.15 180.99 L601.71 181.96 L602.34 182.88 L603.06 183.76 L603.86 184.59 L604.73 185.37 L605.67 186.10 L606.67 186.77 L607.73 187.37 L608.85 187.91 L610.02 188.38 L611.23 188.78 L612.47 189.11 L613.75 189.37 L615.06 189.55 L616.38 189.66 L617.72 189.69 L619.06 189.64 L620.40 189.52 L621.73 189.32 L623.05 189.05 L624.35 188.70 L625.63 188.29 L626.87 187.80 L628.07 187.25 L629.23 186.63 L630.34 185.95 L631.39 185.21 L632.38 184.42 L633.31 183.57 L634.16 182.68 L634.95 181.75 L635.65 180.78 L636.27 179.78 L636.81 178.75 L637.26 177.69 L637.62 176.62 L637.89 175.54 L638.07 174.44 L638.16 173.35 L638.15 172.26 L638.05 171.18 L637.85 170.11 L637.56 169.06 L637.19 168.04 L636.72 167.04 L636.16 166.08 L635.53 165.15 Z"/></clipPath>
<path d="M638.64 183.68 L637.92 182.80 L637.12 181.97 L636.25 181.19 L635.32 180.46 L634.31 179.80 L633.25 179.19 L632.13 178.65 L630.97 178.18 L629.76 177.78 L628.51 177.45 L627.23 177.19 L625.92 177.01 L624.60 176.90 L623.27 176.87 L621.92 176.92 L620.58 177.04 L619.25 177.24 L617.93 177.51 L616.63 177.86 L615.35 178.28 L614.11 178.76 L612.91 179.32 L611.75 179.94 L610.65 180.62 L609.59 181.35 L608.60 182.15 L607.68 182.99 L606.82 183.88 L606.04 184.81 L605.33 185.78 L604.71 186.78 L604.17 187.82 L603.72 188.87 L603.36 189.94 L603.09 191.03 L602.91 192.12 L602.83 193.21 L602.83 194.30 L602.94 195.38 L603.13 196.45 L603.42 197.50 L603.80 198.53 L604.26 199.52 L604.82 200.49 L605.45 201.41 L606.17 202.29 L606.97 203.12 L607.84 203.90 L608.78 204.63 L609.78 205.30 L610.84 205.90 L611.96 206.44 L613.13 206.91 L614.34 207.31 L615.58 207.64 L616.86 207.90 L618.17 208.08 L619.49 208.19 L620.83 208.22 L622.17 208.17 L623.51 208.05 L624.84 207.85 L626.16 207.58 L627.46 207.23 L628.74 206.82 L629.98 206.33 L631.18 205.78 L632.34 205.16 L633.45 204.48 L634.50 203.74 L635.49 202.95 L636.42 202.10 L637.27 201.21 L638.06 200.28 L638.76 199.31 L639.38 198.31 L639.92 197.28 L640.37 196.22 L640.73 195.15 L641.00 194.07 L641.18 192.97 L641.27 191.88 L641.26 190.79 L641.16 189.71 L640.96 188.64 L640.67 187.59 L640.30 186.57 L639.83 185.57 L639.27 184.61 L638.64 183.68 Z" fill="url(#bg)" clip-path="url(#c_bh0)" stroke="#101016" stroke-width="2.32"/>
<path d="M635.53 165.15 L634.81 164.27 L634.01 163.44 L633.14 162.66 L632.21 161.93 L631.20 161.27 L630.14 160.66 L629.02 160.12 L627.86 159.65 L626.65 159.25 L625.40 158.92 L624.12 158.66 L622.81 158.48 L621.49 158.37 L620.16 158.34 L618.81 158.39 L617.47 158.51 L616.14 158.71 L614.82 158.98 L613.52 159.33 L612.24 159.75 L611.00 160.23 L609.80 160.79 L608.64 161.41 L607.54 162.09 L606.48 162.82 L605.49 163.62 L604.57 164.46 L603.71 165.35 L602.93 166.28 L602.22 167.25 L601.60 168.25 L601.06 169.29 L600.61 170.34 L600.25 171.41 L599.98 172.50 L599.80 173.59 L599.72 174.68 L599.72 175.77 L599.83 176.85 L600.02 177.92 L600.31 178.97 L600.69 180.00 L601.15 180.99 L601.71 181.96 L602.34 182.88 L603.06 183.76 L603.86 184.59 L604.73 185.37 L605.67 186.10 L606.67 186.77 L607.73 187.37 L608.85 187.91 L610.02 188.38 L611.23 188.78 L612.47 189.11 L613.75 189.37 L615.06 189.55 L616.38 189.66 L617.72 189.69 L619.06 189.64 L620.40 189.52 L621.73 189.32 L623.05 189.05 L624.35 188.70 L625.63 188.29 L626.87 187.80 L628.07 187.25 L629.23 186.63 L630.34 185.95 L631.39 185.21 L632.38 184.42 L633.31 183.57 L634.16 182.68 L634.95 181.75 L635.65 180.78 L636.27 179.78 L636.81 178.75 L637.26 177.69 L637.62 176.62 L637.89 175.54 L638.07 174.44 L638.16 173.35 L638.15 172.26 L638.05 171.18 L637.85 170.11 L637.56 169.06 L637.19 168.04 L636.72 167.04 L636.16 166.08 L635.53 165.15 Z" fill="none" stroke="#101016" stroke-width="1.45"/>
<path d="M404.88 288.36 L404.17 287.48 L403.37 286.64 L402.50 285.86 L401.56 285.14 L400.56 284.47 L399.50 283.86 L398.38 283.32 L397.21 282.85 L396.00 282.45 L394.75 282.12 L393.48 281.86 L392.17 281.68 L390.85 281.57 L389.51 281.54 L388.17 281.59 L386.83 281.71 L385.50 281.91 L384.18 282.18 L382.88 282.53 L381.60 282.95 L380.36 283.43 L379.16 283.99 L378.00 284.61 L376.89 285.29 L375.84 286.03 L374.85 286.82 L373.92 287.66 L373.07 288.55 L372.28 289.48 L371.58 290.45 L370.96 291.46 L370.42 292.49 L369.97 293.54 L369.61 294.61 L369.34 295.70 L369.16 296.79 L369.07 297.88 L369.08 298.97 L369.18 300.06 L369.38 301.12 L369.67 302.17 L370.04 303.20 L370.51 304.19 L371.06 305.16 L371.70 306.08 L372.42 306.96 L373.22 307.79 L374.09 308.57 L375.02 309.30 L376.03 309.97 L377.09 310.57 L378.21 311.11 L379.37 311.58 L380.58 311.99 L381.83 312.32 L383.11 312.57 L384.41 312.75 L385.74 312.86 L387.07 312.89 L388.42 312.84 L389.76 312.72 L391.09 312.52 L392.41 312.25 L393.71 311.91 L394.98 311.49 L396.23 311.00 L397.43 310.45 L398.59 309.83 L399.69 309.15 L400.75 308.41 L401.74 307.62 L402.66 306.77 L403.52 305.88 L404.30 304.95 L405.01 303.98 L405.63 302.98 L406.17 301.95 L406.62 300.89 L406.98 299.82 L407.25 298.74 L407.43 297.65 L407.51 296.55 L407.51 295.46 L407.40 294.38 L407.21 293.31 L406.92 292.26 L406.54 291.24 L406.08 290.24 L405.52 289.28 L404.88 288.36 Z" fill="url(#holeg_bh1)" stroke="none"/>
<clipPath id="c_bh1"><path d="M404.88 288.36 L404.17 287.48 L403.37 286.64 L402.50 285.86 L401.56 285.14 L400.56 284.47 L399.50 283.86 L398.38 283.32 L397.21 282.85 L396.00 282.45 L394.75 282.12 L393.48 281.86 L392.17 281.68 L390.85 281.57 L389.51 281.54 L388.17 281.59 L386.83 281.71 L385.50 281.91 L384.18 282.18 L382.88 282.53 L381.60 282.95 L380.36 283.43 L379.16 283.99 L378.00 284.61 L376.89 285.29 L375.84 286.03 L374.85 286.82 L373.92 287.66 L373.07 288.55 L372.28 289.48 L371.58 290.45 L370.96 291.46 L370.42 292.49 L369.97 293.54 L369.61 294.61 L369.34 295.70 L369.16 296.79 L369.07 297.88 L369.08 298.97 L369.18 300.06 L369.38 301.12 L369.67 302.17 L370.04 303.20 L370.51 304.19 L371.06 305.16 L371.70 306.08 L372.42 306.96 L373.22 307.79 L374.09 308.57 L375.02 309.30 L376.03 309.97 L377.09 310.57 L378.21 311.11 L379.37 311.58 L380.58 311.99 L381.83 312.32 L383.11 312.57 L384.41 312.75 L385.74 312.86 L387.07 312.89 L388.42 312.84 L389.76 312.72 L391.09 312.52 L392.41 312.25 L393.71 311.91 L394.98 311.49 L396.23 311.00 L397.43 310.45 L398.59 309.83 L399.69 309.15 L400.75 308.41 L401.74 307.62 L402.66 306.77 L403.52 305.88 L404.30 304.95 L405.01 303.98 L405.63 302.98 L406.17 301.95 L406.62 300.89 L406.98 299.82 L407.25 298.74 L407.43 297.65 L407.51 296.55 L407.51 295.46 L407.40 294.38 L407.21 293.31 L406.92 292.26 L406.54 291.24 L406.08 290.24 L405.52 289.28 L404.88 288.36 Z"/></clipPath>
<path d="M407.99 306.89 L407.28 306.01 L406.48 305.17 L405.61 304.39 L404.67 303.67 L403.67 303.00 L402.61 302.39 L401.49 301.85 L400.32 301.38 L399.11 300.98 L397.86 300.65 L396.59 300.39 L395.28 300.21 L393.96 300.10 L392.62 300.07 L391.28 300.12 L389.94 300.24 L388.61 300.44 L387.29 300.71 L385.99 301.06 L384.71 301.48 L383.47 301.96 L382.27 302.52 L381.11 303.14 L380.00 303.82 L378.95 304.56 L377.96 305.35 L377.03 306.19 L376.18 307.08 L375.39 308.01 L374.69 308.98 L374.07 309.99 L373.53 311.02 L373.08 312.07 L372.72 313.14 L372.45 314.23 L372.27 315.32 L372.18 316.41 L372.19 317.50 L372.29 318.59 L372.49 319.65 L372.78 320.70 L373.15 321.73 L373.62 322.72 L374.17 323.69 L374.81 324.61 L375.53 325.49 L376.33 326.32 L377.20 327.10 L378.13 327.83 L379.14 328.50 L380.20 329.10 L381.32 329.64 L382.48 330.11 L383.69 330.52 L384.94 330.85 L386.22 331.10 L387.52 331.28 L388.85 331.39 L390.18 331.42 L391.53 331.37 L392.87 331.25 L394.20 331.05 L395.52 330.78 L396.82 330.44 L398.09 330.02 L399.34 329.53 L400.54 328.98 L401.70 328.36 L402.80 327.68 L403.86 326.94 L404.85 326.15 L405.77 325.30 L406.63 324.41 L407.41 323.48 L408.12 322.51 L408.74 321.51 L409.28 320.48 L409.73 319.42 L410.09 318.35 L410.36 317.27 L410.54 316.18 L410.62 315.08 L410.62 313.99 L410.51 312.91 L410.32 311.84 L410.03 310.79 L409.65 309.77 L409.19 308.77 L408.63 307.81 L407.99 306.89 Z" fill="url(#bg)" clip-path="url(#c_bh1)" stroke="#101016" stroke-width="2.32"/>
<path d="M404.88 288.36 L404.17 287.48 L403.37 286.64 L402.50 285.86 L401.56 285.14 L400.56 284.47 L399.50 283.86 L398.38 283.32 L397.21 282.85 L396.00 282.45 L394.75 282.12 L393.48 281.86 L392.17 281.68 L390.85 281.57 L389.51 281.54 L388.17 281.59 L386.83 281.71 L385.50 281.91 L384.18 282.18 L382.88 282.53 L381.60 282.95 L380.36 283.43 L379.16 283.99 L378.00 284.61 L376.89 285.29 L375.84 286.03 L374.85 286.82 L373.92 287.66 L373.07 288.55 L372.28 289.48 L371.58 290.45 L370.96 291.46 L370.42 292.49 L369.97 293.54 L369.61 294.61 L369.34 295.70 L369.16 296.79 L369.07 297.88 L369.08 298.97 L369.18 300.06 L369.38 301.12 L369.67 302.17 L370.04 303.20 L370.51 304.19 L371.06 305.16 L371.70 306.08 L372.42 306.96 L373.22 307.79 L374.09 308.57 L375.02 309.30 L376.03 309.97 L377.09 310.57 L378.21 311.11 L379.37 311.58 L380.58 311.99 L381.83 312.32 L383.11 312.57 L384.41 312.75 L385.74 312.86 L387.07 312.89 L388.42 312.84 L389.76 312.72 L391.09 312.52 L392.41 312.25 L393.71 311.91 L394.98 311.49 L396.23 311.00 L397.43 310.45 L398.59 309.83 L399.69 309.15 L400.75 308.41 L401.74 307.62 L402.66 306.77 L403.52 305.88 L404.30 304.95 L405.01 303.98 L405.63 302.98 L406.17 301.95 L406.62 300.89 L406.98 299.82 L407.25 298.74 L407.43 297.65 L407.51 296.55 L407.51 295.46 L407.40 294.38 L407.21 293.31 L406.92 292.26 L406.54 291.24 L406.08 290.24 L405.52 289.28 L404.88 288.36 Z" fill="none" stroke="#101016" stroke-width="1.45"/>
<path d="M405.77 506.03 L404.97 505.06 L404.07 504.14 L403.08 503.30 L402.01 502.52 L400.87 501.82 L399.65 501.20 L398.37 500.67 L397.03 500.22 L395.65 499.86 L394.23 499.59 L392.78 499.41 L391.30 499.33 L389.82 499.35 L388.34 499.46 L386.86 499.66 L385.40 499.96 L383.96 500.34 L382.56 500.82 L381.20 501.38 L379.89 502.03 L378.64 502.75 L377.45 503.55 L376.34 504.41 L375.31 505.34 L374.37 506.33 L373.52 507.37 L372.77 508.46 L372.12 509.58 L371.58 510.74 L371.15 511.92 L370.83 513.11 L370.62 514.32 L370.54 515.53 L370.57 516.74 L370.71 517.93 L370.97 519.10 L371.35 520.25 L371.83 521.36 L372.43 522.44 L373.13 523.46 L376.24 541.99 L375.54 540.97 L374.94 539.89 L374.46 538.78 L374.08 537.63 L373.82 536.46 L373.68 535.27 L373.65 534.06 L373.73 532.85 L373.94 531.64 L374.26 530.45 L374.69 529.27 L375.23 528.11 L375.88 526.99 L376.63 525.90 L377.48 524.86 L378.42 523.87 L379.45 522.94 L380.56 522.08 L381.75 521.28 L383.00 520.56 L384.31 519.91 L385.67 519.35 L387.07 518.87 L388.51 518.49 L389.97 518.19 L391.45 517.99 L392.93 517.88 L394.41 517.86 L395.89 517.94 L397.34 518.12 L398.76 518.39 L400.14 518.75 L401.48 519.20 L402.76 519.73 L403.98 520.35 L405.12 521.05 L406.19 521.83 L407.18 522.67 L408.08 523.59 L408.88 524.56 Z" fill="url(#holeg_sl0)" stroke="#101016" stroke-width="1.45" stroke-linejoin="round"/>
<path d="M408.88 524.56 L408.08 523.59 L407.18 522.67 L406.19 521.83 L405.12 521.05 L403.98 520.35 L402.76 519.73 L401.48 519.20 L400.14 518.75 L398.76 518.39 L397.34 518.12 L395.89 517.94 L394.41 517.86 L392.93 517.88 L391.45 517.99 L389.97 518.19 L388.51 518.49 L387.07 518.87 L385.67 519.35 L384.31 519.91 L383.00 520.56 L381.75 521.28 L380.56 522.08 L379.45 522.94 L378.42 523.87 L377.48 524.86 L376.63 525.90 L375.88 526.99 L375.23 528.11 L374.69 529.27 L374.26 530.45 L373.94 531.64 L373.73 532.85 L373.65 534.06 L373.68 535.27 L373.82 536.46 L374.08 537.63 L374.46 538.78 L374.94 539.89 L375.54 540.97 L376.24 541.99 L388.68 616.11 L421.32 598.68 Z" fill="url(#bg)" stroke="url(#bg)" stroke-width="0.6"/>
<path d="M408.88 524.56 L408.08 523.59 L407.18 522.67 L406.19 521.83 L405.12 521.05 L403.98 520.35 L402.76 519.73 L401.48 519.20 L400.14 518.75 L398.76 518.39 L397.34 518.12 L395.89 517.94 L394.41 517.86 L392.93 517.88 L391.45 517.99 L389.97 518.19 L388.51 518.49 L387.07 518.87 L385.67 519.35 L384.31 519.91 L383.00 520.56 L381.75 521.28 L380.56 522.08 L379.45 522.94 L378.42 523.87 L377.48 524.86 L376.63 525.90 L375.88 526.99 L375.23 528.11 L374.69 529.27 L374.26 530.45 L373.94 531.64 L373.73 532.85 L373.65 534.06 L373.68 535.27 L373.82 536.46 L374.08 537.63 L374.46 538.78 L374.94 539.89 L375.54 540.97 L376.24 541.99" fill="none" stroke="#101016" stroke-width="1.45" stroke-linejoin="round" stroke-linecap="round"/>
<path d="M868.14 259.04 L867.34 258.07 L866.44 257.16 L865.46 256.31 L864.39 255.54 L863.24 254.84 L862.02 254.22 L860.74 253.68 L859.40 253.23 L858.02 252.87 L856.60 252.60 L855.15 252.43 L853.68 252.35 L852.20 252.36 L850.71 252.47 L849.23 252.68 L847.77 252.97 L846.33 253.36 L844.93 253.84 L843.57 254.40 L842.26 255.04 L841.01 255.77 L839.82 256.56 L838.71 257.43 L837.68 258.36 L836.74 259.35 L835.89 260.39 L835.14 261.47 L834.49 262.60 L833.95 263.75 L833.52 264.93 L833.20 266.13 L833.00 267.34 L832.91 268.55 L832.94 269.75 L833.08 270.95 L833.35 272.12 L833.72 273.27 L834.21 274.38 L834.80 275.45 L835.50 276.48 L838.61 295.01 L837.91 293.98 L837.32 292.91 L836.83 291.80 L836.46 290.65 L836.19 289.48 L836.05 288.28 L836.02 287.08 L836.11 285.87 L836.31 284.66 L836.63 283.46 L837.06 282.28 L837.60 281.13 L838.25 280.00 L839.00 278.92 L839.85 277.88 L840.79 276.89 L841.82 275.96 L842.93 275.09 L844.12 274.30 L845.37 273.57 L846.68 272.93 L848.04 272.37 L849.44 271.89 L850.88 271.50 L852.34 271.21 L853.82 271.00 L855.31 270.89 L856.79 270.88 L858.26 270.96 L859.71 271.13 L861.13 271.40 L862.51 271.76 L863.85 272.21 L865.13 272.75 L866.35 273.37 L867.50 274.07 L868.57 274.84 L869.55 275.69 L870.45 276.60 L871.25 277.57 Z" fill="url(#holeg_sl1)" stroke="#101016" stroke-width="1.45" stroke-linejoin="round"/>
<path d="M871.25 277.57 L870.45 276.60 L869.55 275.69 L868.57 274.84 L867.50 274.07 L866.35 273.37 L865.13 272.75 L863.85 272.21 L862.51 271.76 L861.13 271.40 L859.71 271.13 L858.26 270.96 L856.79 270.88 L855.31 270.89 L853.82 271.00 L852.34 271.21 L850.88 271.50 L849.44 271.89 L848.04 272.37 L846.68 272.93 L845.37 273.57 L844.12 274.30 L842.93 275.09 L841.82 275.96 L840.79 276.89 L839.85 277.88 L839.00 278.92 L838.25 280.00 L837.60 281.13 L837.06 282.28 L836.63 283.46 L836.31 284.66 L836.11 285.87 L836.02 287.08 L836.05 288.28 L836.19 289.48 L836.46 290.65 L836.83 291.80 L837.32 292.91 L837.91 293.98 L838.61 295.01 L851.05 369.13 L883.69 351.69 Z" fill="url(#bg)" stroke="url(#bg)" stroke-width="0.6"/>
<path d="M871.25 277.57 L870.45 276.60 L869.55 275.69 L868.57 274.84 L867.50 274.07 L866.35 273.37 L865.13 272.75 L863.85 272.21 L862.51 271.76 L861.13 271.40 L859.71 271.13 L858.26 270.96 L856.79 270.88 L855.31 270.89 L853.82 271.00 L852.34 271.21 L850.88 271.50 L849.44 271.89 L848.04 272.37 L846.68 272.93 L845.37 273.57 L844.12 274.30 L842.93 275.09 L841.82 275.96 L840.79 276.89 L839.85 277.88 L839.00 278.92 L838.25 280.00 L837.60 281.13 L837.06 282.28 L836.63 283.46 L836.31 284.66 L836.11 285.87 L836.02 287.08 L836.05 288.28 L836.19 289.48 L836.46 290.65 L836.83 291.80 L837.32 292.91 L837.91 293.98 L838.61 295.01" fill="none" stroke="#101016" stroke-width="1.45" stroke-linejoin="round" stroke-linecap="round"/>
<path d="M409.90 383.32 L410.39 386.18 L417.29 427.32 L416.80 424.46 Z" fill="#7a7c8a" stroke="#7a7c8a" stroke-width="0.7"/>
<path d="M410.39 386.18 L410.94 389.03 L417.85 430.17 L417.29 427.32 Z" fill="#7b7d8a" stroke="#7b7d8a" stroke-width="0.7"/>
<path d="M410.94 389.03 L411.56 391.87 L418.46 433.01 L417.85 430.17 Z" fill="#7c7d8b" stroke="#7c7d8b" stroke-width="0.7"/>
<path d="M411.56 391.87 L412.23 394.69 L419.14 435.83 L418.46 433.01 Z" fill="#7c7e8b" stroke="#7c7e8b" stroke-width="0.7"/>
<path d="M412.23 394.69 L412.97 397.51 L419.88 438.64 L419.14 435.83 Z" fill="#7d7f8c" stroke="#7d7f8c" stroke-width="0.7"/>
<path d="M412.97 397.51 L413.77 400.30 L420.67 441.44 L419.88 438.64 Z" fill="#7d7f8d" stroke="#7d7f8d" stroke-width="0.7"/>
<path d="M413.77 400.30 L414.63 403.09 L421.53 444.22 L420.67 441.44 Z" fill="#7e808d" stroke="#7e808d" stroke-width="0.7"/>
<path d="M414.63 403.09 L415.55 405.85 L422.45 446.99 L421.53 444.22 Z" fill="#7e808e" stroke="#7e808e" stroke-width="0.7"/>
<path d="M415.55 405.85 L416.53 408.60 L423.43 449.74 L422.45 446.99 Z" fill="#7e808e" stroke="#7e808e" stroke-width="0.7"/>
<path d="M416.53 408.60 L417.57 411.33 L424.47 452.47 L423.43 449.74 Z" fill="#7f818f" stroke="#7f818f" stroke-width="0.7"/>
<path d="M417.57 411.33 L418.67 414.04 L425.57 455.18 L424.47 452.47 Z" fill="#7f818f" stroke="#7f818f" stroke-width="0.7"/>
<path d="M418.67 414.04 L419.83 416.74 L426.73 457.87 L425.57 455.18 Z" fill="#80828f" stroke="#80828f" stroke-width="0.7"/>
<path d="M419.83 416.74 L421.05 419.41 L427.95 460.54 L426.73 457.87 Z" fill="#808290" stroke="#808290" stroke-width="0.7"/>
<path d="M421.05 419.41 L422.33 422.06 L429.23 463.20 L427.95 460.54 Z" fill="#808290" stroke="#808290" stroke-width="0.7"/>
<path d="M422.33 422.06 L423.66 424.69 L430.57 465.83 L429.23 463.20 Z" fill="#808290" stroke="#808290" stroke-width="0.7"/>
<path d="M423.66 424.69 L425.06 427.30 L431.96 468.43 L430.57 465.83 Z" fill="#818391" stroke="#818391" stroke-width="0.7"/>
<path d="M425.06 427.30 L426.51 429.88 L433.41 471.02 L431.96 468.43 Z" fill="#818391" stroke="#818391" stroke-width="0.7"/>
<path d="M426.51 429.88 L428.02 432.44 L434.92 473.57 L433.41 471.02 Z" fill="#818391" stroke="#818391" stroke-width="0.7"/>
<path d="M428.02 432.44 L429.58 434.97 L436.48 476.11 L434.92 473.57 Z" fill="#818391" stroke="#818391" stroke-width="0.7"/>
<path d="M429.58 434.97 L431.20 437.48 L438.11 478.62 L436.48 476.11 Z" fill="#818391" stroke="#818391" stroke-width="0.7"/>
<path d="M431.20 437.48 L432.88 439.96 L439.78 481.10 L438.11 478.62 Z" fill="#818391" stroke="#818391" stroke-width="0.7"/>
<path d="M432.88 439.96 L434.61 442.41 L441.51 483.55 L439.78 481.10 Z" fill="#818392" stroke="#818392" stroke-width="0.7"/>
<path d="M434.61 442.41 L436.40 444.84 L443.30 485.98 L441.51 483.55 Z" fill="#818392" stroke="#818392" stroke-width="0.7"/>
<path d="M410.05 384.27 L416.96 425.40 L417.34 427.56 L417.76 429.72 L418.21 431.86 L418.69 434.00 L419.21 436.14 L419.77 438.26 L420.36 440.38 L420.99 442.49 L421.65 444.58 L422.35 446.67 L423.08 448.75 L423.84 450.83 L424.64 452.88 L425.47 454.93 L426.34 456.97 L427.24 459.00 L428.17 461.01 L429.14 463.02 L430.14 465.01 L431.18 466.98 L432.24 468.95 L433.34 470.90 L434.48 472.84 L435.64 474.76 L436.84 476.67 L438.07 478.56 L439.33 480.44 L440.62 482.30 L441.95 484.15 L443.30 485.98 L443.30 485.98" fill="none" stroke="#101016" stroke-width="1.45" stroke-linejoin="round" stroke-linecap="round"/>
<path d="M791.06 255.39 L789.22 252.99 L787.33 250.62 L785.38 248.29 L783.38 245.98 L781.33 243.71 L779.23 241.46 L777.08 239.26 L774.88 237.08 L772.63 234.94 L770.33 232.83 L767.98 230.76 L765.59 228.73 L763.15 226.73 L760.66 224.78 L758.13 222.85 L755.56 220.97 L752.94 219.13 L750.28 217.33 L747.58 215.56 L744.84 213.84 L742.05 212.16 L739.23 210.53 L736.37 208.93 L733.48 207.38 L730.54 205.87 L727.57 204.40 L724.57 202.98 L721.53 201.61 L718.46 200.28 L715.36 198.99 L712.23 197.75 L709.06 196.56 L705.87 195.42 L702.65 194.32 L699.40 193.27 L696.13 192.26 L692.83 191.31 L689.51 190.40 L686.16 189.54 L682.80 188.73 L679.41 187.97 L676.00 187.26 L672.57 186.60 L669.12 185.99 L665.66 185.43 L662.18 184.92 L658.69 184.46 L655.18 184.05 L651.66 183.69 L648.13 183.38 L644.59 183.12 L641.04 182.91 L637.48 182.76 L633.91 182.65 L630.34 182.60 L626.76 182.59 L623.18 182.64 L619.60 182.74 L616.01 182.89 L612.42 183.09 L608.84 183.34 L605.25 183.64 L601.67 184.00 L598.09 184.40 L594.52 184.85 L590.95 185.36 L587.39 185.91 L583.83 186.52 L580.29 187.17 L576.76 187.88 L573.23 188.63 L569.72 189.43 L566.23 190.28 L562.74 191.18 L559.28 192.13 L555.83 193.13 L552.39 194.17 L548.98 195.27 L545.58 196.40 L542.21 197.59 L538.86 198.82 L535.53 200.10 L532.22 201.43 L528.94 202.80 L525.69 204.21 L522.46 205.67 L519.26 207.17 L516.09 208.72 L512.95 210.31 L509.84 211.94 L506.76 213.61 L503.71 215.33 L500.70 217.09 L497.72 218.89 L494.78 220.72 L491.87 222.60 L489.00 224.51 L486.17 226.47 L483.38 228.46 L480.62 230.49 L477.91 232.55 L475.24 234.65 L472.61 236.79 L470.02 238.96 L467.48 241.17 L464.98 243.40 L462.53 245.67 L460.12 247.98 L457.76 250.31 L455.45 252.67 L453.19 255.06 L450.97 257.49 L448.81 259.94 L446.69 262.41 L444.63 264.92 L442.61 267.45 L440.65 270.01 L438.75 272.59 L436.89 275.19 L435.09 277.82 L433.34 280.46 L431.65 283.13 L430.02 285.82 L428.44 288.53 L426.91 291.26 L425.45 294.01 L424.04 296.77 L422.68 299.55 L421.39 302.35 L420.16 305.16 L418.98 307.98 L417.86 310.82 L416.81 313.66 L415.81 316.52 L414.87 319.39 L414.00 322.27 L413.18 325.16 L412.43 328.05 L411.74 330.95 L411.10 333.86 L410.53 336.77 L410.03 339.69 L409.58 342.61 L409.20 345.53 L408.88 348.46 L408.62 351.38 L408.42 354.30 L408.29 357.23 L408.22 360.15 L408.21 363.06 L408.26 365.98 L408.38 368.88 L408.56 371.79 L408.80 374.68 L409.10 377.57 L409.47 380.45 L409.90 383.32 L410.39 386.18 L410.94 389.03 L411.56 391.87 L412.23 394.69 L412.97 397.51 L413.77 400.30 L414.63 403.09 L415.55 405.85 L416.53 408.60 L417.57 411.33 L418.67 414.04 L419.83 416.74 L421.05 419.41 L422.33 422.06 L423.66 424.69 L425.06 427.30 L426.51 429.88 L428.02 432.44 L429.58 434.97 L431.20 437.48 L432.88 439.96 L434.61 442.41 L436.40 444.84 Z" fill="#989cb0" stroke="#101016" stroke-width="1.45" stroke-linejoin="round"/>
<path d="M518.07 262.86 L518.37 264.35 L522.66 289.92 L522.36 288.43 Z" fill="#7b7d8a" stroke="#7b7d8a" stroke-width="0.7"/>
<path d="M518.37 264.35 L518.75 265.83 L523.04 291.40 L522.66 289.92 Z" fill="#7d7e8c" stroke="#7d7e8c" stroke-width="0.7"/>
<path d="M518.75 265.83 L519.21 267.28 L523.50 292.85 L523.04 291.40 Z" fill="#7e808d" stroke="#7e808d" stroke-width="0.7"/>
<path d="M519.21 267.28 L519.76 268.71 L524.05 294.28 L523.50 292.85 Z" fill="#7f818f" stroke="#7f818f" stroke-width="0.7"/>
<path d="M519.76 268.71 L520.39 270.12 L524.68 295.69 L524.05 294.28 Z" fill="#808290" stroke="#808290" stroke-width="0.7"/>
<path d="M520.39 270.12 L521.10 271.49 L525.39 297.06 L524.68 295.69 Z" fill="#818390" stroke="#818390" stroke-width="0.7"/>
<path d="M521.10 271.49 L521.89 272.83 L526.19 298.40 L525.39 297.06 Z" fill="#818391" stroke="#818391" stroke-width="0.7"/>
<path d="M521.89 272.83 L521.90 272.85 L526.19 298.42 L526.19 298.40 Z" fill="#7f818e" stroke="#7f818e" stroke-width="0.7"/>
<path d="M521.90 272.85 L522.67 274.26 L526.96 299.83 L526.19 298.42 Z" fill="#818391" stroke="#818391" stroke-width="0.7"/>
<path d="M522.67 274.26 L523.26 275.74 L527.55 301.31 L526.96 299.83 Z" fill="#7f818f" stroke="#7f818f" stroke-width="0.7"/>
<path d="M523.26 275.74 L523.66 277.27 L527.95 302.84 L527.55 301.31 Z" fill="#7d7f8c" stroke="#7d7f8c" stroke-width="0.7"/>
<path d="M413.87 318.32 L414.17 319.88 L418.46 345.45 L418.16 343.90 Z" fill="#7b7d8a" stroke="#7b7d8a" stroke-width="0.7"/>
<path d="M414.17 319.88 L414.56 321.41 L418.85 346.98 L418.46 345.45 Z" fill="#7c7e8c" stroke="#7c7e8c" stroke-width="0.7"/>
<path d="M414.56 321.41 L415.04 322.92 L419.33 348.49 L418.85 346.98 Z" fill="#7e808d" stroke="#7e808d" stroke-width="0.7"/>
<path d="M415.04 322.92 L415.61 324.40 L419.90 349.98 L419.33 348.49 Z" fill="#7f818f" stroke="#7f818f" stroke-width="0.7"/>
<path d="M415.61 324.40 L415.84 324.88 L420.13 350.45 L419.90 349.98 Z" fill="#808290" stroke="#808290" stroke-width="0.7"/>
<path d="M416.83 345.31 L417.21 347.35 L421.50 372.93 L421.12 370.88 Z" fill="#7b7d8a" stroke="#7b7d8a" stroke-width="0.7"/>
<path d="M417.21 347.35 L417.76 350.00 L422.05 375.57 L421.50 372.93 Z" fill="#7b7d8b" stroke="#7b7d8b" stroke-width="0.7"/>
<path d="M417.76 350.00 L418.45 353.36 L422.74 378.93 L422.05 375.57 Z" fill="#7b7d8b" stroke="#7b7d8b" stroke-width="0.7"/>
<path d="M418.45 353.36 L419.24 357.30 L423.53 382.87 L422.74 378.93 Z" fill="#7b7d8a" stroke="#7b7d8a" stroke-width="0.7"/>
<path d="M419.24 357.30 L420.15 361.61 L424.44 387.18 L423.53 382.87 Z" fill="#7b7d8b" stroke="#7b7d8b" stroke-width="0.7"/>
<path d="M420.15 361.61 L421.22 366.11 L425.51 391.68 L424.44 387.18 Z" fill="#7c7e8b" stroke="#7c7e8b" stroke-width="0.7"/>
<path d="M421.22 366.11 L422.47 370.61 L426.76 396.18 L425.51 391.68 Z" fill="#7d7f8c" stroke="#7d7f8c" stroke-width="0.7"/>
<path d="M422.47 370.61 L423.92 374.92 L428.21 400.50 L426.76 396.18 Z" fill="#7e808e" stroke="#7e808e" stroke-width="0.7"/>
<path d="M423.92 374.92 L425.69 379.24 L429.98 404.81 L428.21 400.50 Z" fill="#7f818f" stroke="#7f818f" stroke-width="0.7"/>
<path d="M425.69 379.24 L427.77 383.75 L432.07 409.32 L429.98 404.81 Z" fill="#808290" stroke="#808290" stroke-width="0.7"/>
<path d="M427.77 383.75 L430.04 388.26 L434.33 413.83 L432.07 409.32 Z" fill="#808290" stroke="#808290" stroke-width="0.7"/>
<path d="M430.04 388.26 L432.35 392.58 L436.64 418.15 L434.33 413.83 Z" fill="#818391" stroke="#818391" stroke-width="0.7"/>
<path d="M432.35 392.58 L434.59 396.53 L438.88 422.10 L436.64 418.15 Z" fill="#818391" stroke="#818391" stroke-width="0.7"/>
<path d="M434.59 396.53 L436.62 399.93 L440.91 425.50 L438.88 422.10 Z" fill="#818391" stroke="#818391" stroke-width="0.7"/>
<path d="M436.62 399.93 L438.55 402.77 L442.84 428.35 L440.91 425.50 Z" fill="#818391" stroke="#818391" stroke-width="0.7"/>
<path d="M438.55 402.77 L440.49 405.23 L444.79 430.80 L442.84 428.35 Z" fill="#818392" stroke="#818392" stroke-width="0.7"/>
<path d="M440.49 405.23 L442.36 407.31 L446.66 432.88 L444.79 430.80 Z" fill="#818391" stroke="#818391" stroke-width="0.7"/>
<path d="M442.36 407.31 L444.06 409.05 L448.35 434.62 L446.66 432.88 Z" fill="#818391" stroke="#818391" stroke-width="0.7"/>
<path d="M444.06 409.05 L445.47 410.46 L449.77 436.03 L448.35 434.62 Z" fill="#818391" stroke="#818391" stroke-width="0.7"/>
<path d="M445.47 410.46 L446.52 411.57 L450.81 437.14 L449.77 436.03 Z" fill="#818391" stroke="#818391" stroke-width="0.7"/>
<path d="M518.07 262.86 L522.36 288.43 L522.66 289.92 L523.04 291.40 L523.50 292.85 L524.05 294.28 L524.68 295.69 L525.39 297.06 L526.19 298.40 L526.19 298.42 L526.96 299.83 L527.55 301.31 L527.95 302.84 L523.66 277.27" fill="none" stroke="#101016" stroke-width="1.45" stroke-linejoin="round" stroke-linecap="round"/>
<path d="M413.87 318.32 L418.16 343.90 L418.46 345.45 L418.85 346.98 L419.33 348.49 L419.90 349.98 L420.13 350.45 L415.84 324.88" fill="none" stroke="#101016" stroke-width="1.45" stroke-linejoin="round" stroke-linecap="round"/>
<path d="M416.83 345.31 L421.12 370.88 L421.50 372.93 L422.05 375.57 L422.74 378.93 L423.53 382.87 L424.44 387.18 L425.51 391.68 L426.76 396.18 L428.21 400.50 L429.98 404.81 L432.07 409.32 L434.33 413.83 L436.64 418.15 L438.88 422.10 L440.91 425.50 L442.84 428.35 L444.79 430.80 L446.66 432.88 L448.35 434.62 L449.77 436.03 L450.81 437.14" fill="none" stroke="#101016" stroke-width="1.45" stroke-linejoin="round" stroke-linecap="round"/>
<path d="M669.27 292.58 L668.73 291.90 L667.97 290.96 L667.08 289.85 L666.11 288.66 L665.14 287.47 L664.22 286.37 L663.40 285.39 L662.62 284.48 L661.83 283.56 L660.98 282.60 L660.02 281.53 L658.90 280.30 L657.58 278.85 L656.09 277.22 L654.49 275.49 L652.84 273.73 L651.18 272.01 L649.57 270.43 L648.06 269.01 L646.62 267.71 L645.17 266.45 L643.65 265.19 L641.99 263.86 L640.11 262.41 L637.98 260.82 L635.62 259.11 L633.13 257.34 L630.56 255.56 L628.00 253.79 L625.50 252.10 L623.17 250.53 L620.99 249.05 L618.80 247.59 L616.47 246.09 L613.85 244.49 L610.81 242.72 L607.08 240.64 L602.72 238.29 L598.07 235.84 L593.49 233.45 L589.32 231.29 L585.90 229.54 L585.90 229.54 L584.47 228.63 L582.98 227.78 L581.44 226.99 L579.85 226.26 L578.22 225.60 L576.54 225.00 L574.83 224.46 L573.09 223.99 L571.31 223.59 L569.51 223.25 L567.69 222.99 L565.84 222.79 L563.98 222.67 L562.11 222.61 L560.24 222.63 L558.36 222.71 L556.48 222.87 L554.60 223.10 L552.73 223.39 L550.88 223.75 L549.04 224.19 L547.22 224.68 L545.43 225.25 L543.67 225.88 L541.93 226.57 L540.23 227.33 L538.57 228.14 L536.96 229.02 L535.38 229.95 L533.86 230.93 L532.39 231.97 L530.98 233.06 L529.62 234.20 L528.32 235.38 L527.09 236.61 L525.93 237.88 L524.83 239.18 L523.81 240.52 L522.86 241.90 L521.98 243.30 L521.18 244.73 L520.46 246.19 L519.82 247.66 L519.27 249.16 L518.79 250.66 L518.40 252.18 L518.10 253.71 L517.88 255.24 L517.74 256.77 L517.69 258.30 L517.73 259.83 L517.86 261.35 L518.07 262.86 L518.37 264.35 L518.75 265.83 L519.21 267.28 L519.76 268.71 L520.39 270.12 L521.10 271.49 L521.89 272.83 L521.90 272.85 L522.67 274.26 L523.26 275.74 L523.66 277.27 L523.87 278.83 L523.88 280.41 L523.70 282.00 L523.33 283.58 L522.77 285.13 L522.02 286.64 L521.10 288.09 L520.02 289.47 L518.77 290.77 L517.39 291.96 L515.87 293.04 L514.24 294.01 L512.51 294.84 L510.70 295.53 L508.82 296.08 L506.90 296.48 L504.96 296.72 L503.01 296.80 L501.07 296.72 L499.17 296.49 L497.32 296.10 L495.53 295.56 L493.84 294.87 L492.25 294.04 L490.78 293.09 L489.45 292.01 L488.26 290.81 L488.25 290.80 L487.10 289.58 L485.88 288.42 L484.59 287.30 L483.23 286.24 L481.81 285.23 L480.32 284.29 L478.78 283.41 L477.18 282.59 L475.53 281.84 L473.83 281.16 L472.08 280.54 L470.30 280.00 L468.48 279.53 L466.63 279.13 L464.75 278.81 L462.85 278.56 L460.93 278.38 L459.00 278.28 L457.05 278.26 L455.10 278.31 L453.15 278.44 L451.20 278.64 L449.26 278.92 L447.33 279.27 L445.41 279.69 L443.52 280.19 L441.65 280.76 L439.82 281.40 L438.01 282.11 L436.24 282.89 L434.52 283.73 L432.83 284.63 L431.20 285.60 L429.62 286.62 L428.10 287.70 L426.64 288.84 L425.24 290.03 L423.91 291.26 L422.64 292.55 L421.45 293.87 L420.33 295.24 L419.30 296.65 L418.34 298.08 L417.46 299.55 L416.67 301.05 L415.96 302.57 L415.34 304.11 L414.81 305.67 L414.37 307.24 L414.02 308.82 L413.76 310.41 L413.60 312.00 L413.53 313.59 L413.55 315.18 L413.66 316.76 L413.87 318.32 L414.17 319.88 L414.56 321.41 L415.04 322.92 L415.61 324.40 L415.84 324.88 L415.86 326.41 L415.86 328.56 L415.88 331.08 L415.92 333.76 L415.99 336.38 L416.12 338.69 L416.27 340.57 L416.40 342.14 L416.57 343.65 L416.83 345.31 L417.21 347.35 L417.76 350.00 L418.45 353.36 L419.24 357.30 L420.15 361.61 L421.22 366.11 L422.47 370.61 L423.92 374.92 L425.69 379.24 L427.77 383.75 L430.04 388.26 L432.35 392.58 L434.59 396.53 L436.62 399.93 L438.55 402.77 L440.49 405.23 L442.36 407.31 L444.06 409.05 L445.47 410.46 L446.52 411.57 Z" fill="#989cb0" stroke="#101016" stroke-width="1.45" stroke-linejoin="round"/>
<path d="M471.09 302.80 L470.38 301.92 L469.58 301.08 L468.71 300.30 L467.77 299.58 L466.77 298.91 L465.71 298.30 L464.59 297.76 L463.42 297.29 L462.21 296.89 L460.97 296.56 L459.69 296.30 L458.38 296.12 L457.06 296.01 L455.72 295.98 L454.38 296.03 L453.04 296.15 L451.71 296.35 L450.39 296.62 L449.09 296.97 L447.81 297.39 L446.57 297.87 L445.37 298.43 L444.21 299.05 L443.10 299.73 L442.05 300.47 L441.06 301.26 L440.13 302.10 L439.28 302.99 L438.49 303.92 L437.79 304.89 L437.17 305.90 L436.63 306.93 L436.18 307.98 L435.82 309.05 L435.55 310.14 L435.37 311.23 L435.28 312.32 L435.29 313.41 L435.39 314.50 L435.59 315.56 L435.88 316.61 L436.25 317.64 L436.72 318.63 L437.27 319.60 L437.91 320.52 L438.63 321.40 L439.43 322.23 L440.30 323.01 L441.23 323.74 L442.24 324.41 L443.30 325.01 L444.42 325.55 L445.58 326.02 L446.79 326.43 L448.04 326.76 L449.32 327.01 L450.63 327.19 L451.95 327.30 L453.28 327.33 L454.63 327.28 L455.97 327.16 L457.30 326.96 L458.62 326.69 L459.92 326.34 L461.19 325.93 L462.44 325.44 L463.64 324.89 L464.80 324.27 L465.90 323.59 L466.96 322.85 L467.95 322.06 L468.87 321.21 L469.73 320.32 L470.51 319.39 L471.22 318.42 L471.84 317.42 L472.38 316.39 L472.83 315.33 L473.19 314.26 L473.46 313.18 L473.64 312.09 L473.72 310.99 L473.72 309.90 L473.61 308.82 L473.42 307.75 L473.13 306.70 L472.75 305.68 L472.29 304.68 L471.73 303.72 L471.09 302.80 Z" fill="url(#holeg_sh0)" stroke="none"/>
<clipPath id="c_sh0"><path d="M471.09 302.80 L470.38 301.92 L469.58 301.08 L468.71 300.30 L467.77 299.58 L466.77 298.91 L465.71 298.30 L464.59 297.76 L463.42 297.29 L462.21 296.89 L460.97 296.56 L459.69 296.30 L458.38 296.12 L457.06 296.01 L455.72 295.98 L454.38 296.03 L453.04 296.15 L451.71 296.35 L450.39 296.62 L449.09 296.97 L447.81 297.39 L446.57 297.87 L445.37 298.43 L444.21 299.05 L443.10 299.73 L442.05 300.47 L441.06 301.26 L440.13 302.10 L439.28 302.99 L438.49 303.92 L437.79 304.89 L437.17 305.90 L436.63 306.93 L436.18 307.98 L435.82 309.05 L435.55 310.14 L435.37 311.23 L435.28 312.32 L435.29 313.41 L435.39 314.50 L435.59 315.56 L435.88 316.61 L436.25 317.64 L436.72 318.63 L437.27 319.60 L437.91 320.52 L438.63 321.40 L439.43 322.23 L440.30 323.01 L441.23 323.74 L442.24 324.41 L443.30 325.01 L444.42 325.55 L445.58 326.02 L446.79 326.43 L448.04 326.76 L449.32 327.01 L450.63 327.19 L451.95 327.30 L453.28 327.33 L454.63 327.28 L455.97 327.16 L457.30 326.96 L458.62 326.69 L459.92 326.34 L461.19 325.93 L462.44 325.44 L463.64 324.89 L464.80 324.27 L465.90 323.59 L466.96 322.85 L467.95 322.06 L468.87 321.21 L469.73 320.32 L470.51 319.39 L471.22 318.42 L471.84 317.42 L472.38 316.39 L472.83 315.33 L473.19 314.26 L473.46 313.18 L473.64 312.09 L473.72 310.99 L473.72 309.90 L473.61 308.82 L473.42 307.75 L473.13 306.70 L472.75 305.68 L472.29 304.68 L471.73 303.72 L471.09 302.80 Z"/></clipPath>
<path d="M475.82 330.96 L475.10 330.08 L474.31 329.25 L473.44 328.47 L472.50 327.74 L471.50 327.07 L470.43 326.47 L469.32 325.93 L468.15 325.46 L466.94 325.05 L465.69 324.72 L464.41 324.47 L463.11 324.29 L461.79 324.18 L460.45 324.15 L459.11 324.20 L457.77 324.32 L456.43 324.52 L455.11 324.79 L453.81 325.14 L452.54 325.55 L451.30 326.04 L450.10 326.59 L448.94 327.21 L447.83 327.89 L446.78 328.63 L445.79 329.42 L444.86 330.27 L444.00 331.16 L443.22 332.09 L442.52 333.06 L441.89 334.06 L441.36 335.09 L440.91 336.15 L440.54 337.22 L440.27 338.30 L440.10 339.39 L440.01 340.49 L440.02 341.58 L440.12 342.66 L440.32 343.73 L440.60 344.78 L440.98 345.80 L441.45 346.80 L442.00 347.76 L442.64 348.69 L443.36 349.57 L444.15 350.40 L445.02 351.18 L445.96 351.91 L446.96 352.57 L448.03 353.18 L449.14 353.72 L450.31 354.19 L451.52 354.59 L452.77 354.92 L454.05 355.18 L455.35 355.36 L456.68 355.47 L458.01 355.50 L459.35 355.45 L460.69 355.33 L462.03 355.13 L463.35 354.86 L464.65 354.51 L465.92 354.09 L467.16 353.61 L468.37 353.05 L469.52 352.43 L470.63 351.75 L471.68 351.02 L472.68 350.22 L473.60 349.38 L474.46 348.49 L475.24 347.56 L475.94 346.59 L476.57 345.58 L477.10 344.55 L477.56 343.50 L477.92 342.43 L478.19 341.34 L478.37 340.25 L478.45 339.16 L478.44 338.07 L478.34 336.99 L478.15 335.92 L477.86 334.87 L477.48 333.84 L477.01 332.85 L476.46 331.88 L475.82 330.96 Z" fill="#d4d6de" clip-path="url(#c_sh0)" stroke="#101016" stroke-width="2.32"/>
<path d="M471.09 302.80 L470.38 301.92 L469.58 301.08 L468.71 300.30 L467.77 299.58 L466.77 298.91 L465.71 298.30 L464.59 297.76 L463.42 297.29 L462.21 296.89 L460.97 296.56 L459.69 296.30 L458.38 296.12 L457.06 296.01 L455.72 295.98 L454.38 296.03 L453.04 296.15 L451.71 296.35 L450.39 296.62 L449.09 296.97 L447.81 297.39 L446.57 297.87 L445.37 298.43 L444.21 299.05 L443.10 299.73 L442.05 300.47 L441.06 301.26 L440.13 302.10 L439.28 302.99 L438.49 303.92 L437.79 304.89 L437.17 305.90 L436.63 306.93 L436.18 307.98 L435.82 309.05 L435.55 310.14 L435.37 311.23 L435.28 312.32 L435.29 313.41 L435.39 314.50 L435.59 315.56 L435.88 316.61 L436.25 317.64 L436.72 318.63 L437.27 319.60 L437.91 320.52 L438.63 321.40 L439.43 322.23 L440.30 323.01 L441.23 323.74 L442.24 324.41 L443.30 325.01 L444.42 325.55 L445.58 326.02 L446.79 326.43 L448.04 326.76 L449.32 327.01 L450.63 327.19 L451.95 327.30 L453.28 327.33 L454.63 327.28 L455.97 327.16 L457.30 326.96 L458.62 326.69 L459.92 326.34 L461.19 325.93 L462.44 325.44 L463.64 324.89 L464.80 324.27 L465.90 323.59 L466.96 322.85 L467.95 322.06 L468.87 321.21 L469.73 320.32 L470.51 319.39 L471.22 318.42 L471.84 317.42 L472.38 316.39 L472.83 315.33 L473.19 314.26 L473.46 313.18 L473.64 312.09 L473.72 310.99 L473.72 309.90 L473.61 308.82 L473.42 307.75 L473.13 306.70 L472.75 305.68 L472.29 304.68 L471.73 303.72 L471.09 302.80 Z" fill="none" stroke="#101016" stroke-width="1.45"/>
<path d="M575.26 247.15 L574.55 246.27 L573.75 245.44 L572.88 244.66 L571.94 243.93 L570.94 243.26 L569.88 242.66 L568.76 242.12 L567.59 241.65 L566.38 241.25 L565.14 240.92 L563.86 240.66 L562.55 240.48 L561.23 240.37 L559.89 240.34 L558.55 240.39 L557.21 240.51 L555.88 240.71 L554.56 240.98 L553.26 241.33 L551.98 241.74 L550.74 242.23 L549.54 242.78 L548.38 243.40 L547.27 244.08 L546.22 244.82 L545.23 245.61 L544.30 246.46 L543.45 247.35 L542.66 248.28 L541.96 249.25 L541.34 250.25 L540.80 251.28 L540.35 252.34 L539.99 253.41 L539.72 254.49 L539.54 255.58 L539.45 256.68 L539.46 257.77 L539.56 258.85 L539.76 259.92 L540.05 260.97 L540.42 261.99 L540.89 262.99 L541.44 263.95 L542.08 264.88 L542.80 265.76 L543.60 266.59 L544.47 267.37 L545.40 268.10 L546.41 268.76 L547.47 269.37 L548.59 269.91 L549.75 270.38 L550.96 270.78 L552.21 271.11 L553.49 271.37 L554.80 271.55 L556.12 271.66 L557.45 271.69 L558.80 271.64 L560.14 271.52 L561.47 271.32 L562.79 271.05 L564.09 270.70 L565.36 270.28 L566.61 269.80 L567.81 269.24 L568.97 268.62 L570.07 267.94 L571.13 267.21 L572.12 266.41 L573.04 265.57 L573.90 264.68 L574.68 263.75 L575.39 262.78 L576.01 261.78 L576.55 260.74 L577.00 259.69 L577.36 258.62 L577.63 257.53 L577.81 256.44 L577.89 255.35 L577.89 254.26 L577.78 253.18 L577.59 252.11 L577.30 251.06 L576.92 250.03 L576.46 249.04 L575.90 248.07 L575.26 247.15 Z" fill="url(#holeg_sh1)" stroke="none"/>
<clipPath id="c_sh1"><path d="M575.26 247.15 L574.55 246.27 L573.75 245.44 L572.88 244.66 L571.94 243.93 L570.94 243.26 L569.88 242.66 L568.76 242.12 L567.59 241.65 L566.38 241.25 L565.14 240.92 L563.86 240.66 L562.55 240.48 L561.23 240.37 L559.89 240.34 L558.55 240.39 L557.21 240.51 L555.88 240.71 L554.56 240.98 L553.26 241.33 L551.98 241.74 L550.74 242.23 L549.54 242.78 L548.38 243.40 L547.27 244.08 L546.22 244.82 L545.23 245.61 L544.30 246.46 L543.45 247.35 L542.66 248.28 L541.96 249.25 L541.34 250.25 L540.80 251.28 L540.35 252.34 L539.99 253.41 L539.72 254.49 L539.54 255.58 L539.45 256.68 L539.46 257.77 L539.56 258.85 L539.76 259.92 L540.05 260.97 L540.42 261.99 L540.89 262.99 L541.44 263.95 L542.08 264.88 L542.80 265.76 L543.60 266.59 L544.47 267.37 L545.40 268.10 L546.41 268.76 L547.47 269.37 L548.59 269.91 L549.75 270.38 L550.96 270.78 L552.21 271.11 L553.49 271.37 L554.80 271.55 L556.12 271.66 L557.45 271.69 L558.80 271.64 L560.14 271.52 L561.47 271.32 L562.79 271.05 L564.09 270.70 L565.36 270.28 L566.61 269.80 L567.81 269.24 L568.97 268.62 L570.07 267.94 L571.13 267.21 L572.12 266.41 L573.04 265.57 L573.90 264.68 L574.68 263.75 L575.39 262.78 L576.01 261.78 L576.55 260.74 L577.00 259.69 L577.36 258.62 L577.63 257.53 L577.81 256.44 L577.89 255.35 L577.89 254.26 L577.78 253.18 L577.59 252.11 L577.30 251.06 L576.92 250.03 L576.46 249.04 L575.90 248.07 L575.26 247.15 Z"/></clipPath>
<path d="M579.99 275.32 L579.27 274.44 L578.48 273.60 L577.61 272.82 L576.67 272.10 L575.67 271.43 L574.60 270.82 L573.49 270.29 L572.32 269.81 L571.11 269.41 L569.86 269.08 L568.58 268.82 L567.28 268.64 L565.96 268.54 L564.62 268.51 L563.28 268.55 L561.94 268.68 L560.60 268.87 L559.28 269.15 L557.98 269.49 L556.71 269.91 L555.47 270.40 L554.27 270.95 L553.11 271.57 L552.00 272.25 L550.95 272.99 L549.96 273.78 L549.03 274.62 L548.17 275.51 L547.39 276.45 L546.69 277.41 L546.07 278.42 L545.53 279.45 L545.08 280.50 L544.71 281.57 L544.44 282.66 L544.27 283.75 L544.18 284.84 L544.19 285.94 L544.29 287.02 L544.49 288.09 L544.77 289.13 L545.15 290.16 L545.62 291.16 L546.17 292.12 L546.81 293.04 L547.53 293.92 L548.32 294.75 L549.19 295.54 L550.13 296.26 L551.13 296.93 L552.20 297.53 L553.31 298.07 L554.48 298.55 L555.69 298.95 L556.94 299.28 L558.22 299.53 L559.52 299.72 L560.85 299.82 L562.18 299.85 L563.52 299.81 L564.86 299.68 L566.20 299.49 L567.52 299.21 L568.82 298.87 L570.09 298.45 L571.33 297.96 L572.54 297.41 L573.69 296.79 L574.80 296.11 L575.85 295.37 L576.85 294.58 L577.77 293.74 L578.63 292.85 L579.41 291.91 L580.11 290.94 L580.74 289.94 L581.27 288.91 L581.73 287.86 L582.09 286.78 L582.36 285.70 L582.54 284.61 L582.62 283.51 L582.61 282.42 L582.51 281.34 L582.32 280.27 L582.03 279.22 L581.65 278.20 L581.18 277.20 L580.63 276.24 L579.99 275.32 Z" fill="#d4d6de" clip-path="url(#c_sh1)" stroke="#101016" stroke-width="2.32"/>
<path d="M575.26 247.15 L574.55 246.27 L573.75 245.44 L572.88 244.66 L571.94 243.93 L570.94 243.26 L569.88 242.66 L568.76 242.12 L567.59 241.65 L566.38 241.25 L565.14 240.92 L563.86 240.66 L562.55 240.48 L561.23 240.37 L559.89 240.34 L558.55 240.39 L557.21 240.51 L555.88 240.71 L554.56 240.98 L553.26 241.33 L551.98 241.74 L550.74 242.23 L549.54 242.78 L548.38 243.40 L547.27 244.08 L546.22 244.82 L545.23 245.61 L544.30 246.46 L543.45 247.35 L542.66 248.28 L541.96 249.25 L541.34 250.25 L540.80 251.28 L540.35 252.34 L539.99 253.41 L539.72 254.49 L539.54 255.58 L539.45 256.68 L539.46 257.77 L539.56 258.85 L539.76 259.92 L540.05 260.97 L540.42 261.99 L540.89 262.99 L541.44 263.95 L542.08 264.88 L542.80 265.76 L543.60 266.59 L544.47 267.37 L545.40 268.10 L546.41 268.76 L547.47 269.37 L548.59 269.91 L549.75 270.38 L550.96 270.78 L552.21 271.11 L553.49 271.37 L554.80 271.55 L556.12 271.66 L557.45 271.69 L558.80 271.64 L560.14 271.52 L561.47 271.32 L562.79 271.05 L564.09 270.70 L565.36 270.28 L566.61 269.80 L567.81 269.24 L568.97 268.62 L570.07 267.94 L571.13 267.21 L572.12 266.41 L573.04 265.57 L573.90 264.68 L574.68 263.75 L575.39 262.78 L576.01 261.78 L576.55 260.74 L577.00 259.69 L577.36 258.62 L577.63 257.53 L577.81 256.44 L577.89 255.35 L577.89 254.26 L577.78 253.18 L577.59 252.11 L577.30 251.06 L576.92 250.03 L576.46 249.04 L575.90 248.07 L575.26 247.15 Z" fill="none" stroke="#101016" stroke-width="1.45"/>
<path d="M476.36 455.19 L741.28 313.68 L768.50 340.50 L768.50 520.00 L497.05 578.42 Z" fill="url(#bg)" stroke="url(#bg)" stroke-width="0.6"/>
<path d="M543.07 359.99 L541.18 357.70 L539.06 355.54 L536.72 353.54 L534.19 351.70 L531.47 350.05 L528.59 348.58 L525.56 347.31 L522.40 346.24 L519.13 345.39 L515.76 344.76 L512.33 344.34 L508.85 344.15 L505.34 344.19 L501.83 344.44 L498.33 344.93 L494.87 345.63 L491.47 346.55 L488.15 347.67 L484.93 349.00 L481.83 350.53 L478.86 352.24 L476.06 354.13 L473.43 356.18 L471.00 358.38 L468.77 360.72 L466.76 363.18 L464.98 365.74 L463.45 368.40 L462.16 371.14 L461.14 373.93 L460.39 376.77 L459.91 379.63 L459.70 382.49 L459.77 385.34 L460.11 388.17 L460.73 390.94 L461.61 393.66 L462.77 396.29 L464.17 398.83 L465.83 401.25 L471.89 437.39 L470.24 434.96 L468.83 432.43 L467.68 429.79 L466.79 427.08 L466.18 424.30 L465.83 421.48 L465.76 418.62 L465.97 415.76 L466.45 412.90 L467.21 410.07 L468.23 407.27 L469.51 404.54 L471.04 401.88 L472.82 399.31 L474.83 396.85 L477.06 394.51 L479.50 392.31 L482.13 390.26 L484.93 388.38 L487.89 386.66 L490.99 385.14 L494.21 383.81 L497.53 382.68 L500.93 381.76 L504.39 381.06 L507.89 380.58 L511.40 380.32 L514.91 380.28 L518.39 380.48 L521.83 380.89 L525.19 381.53 L528.46 382.38 L531.62 383.44 L534.66 384.71 L537.54 386.18 L540.26 387.84 L542.79 389.67 L545.12 391.67 L547.24 393.83 L549.14 396.13 Z" fill="url(#holeg_cu0)" stroke="#101016" stroke-width="1.45" stroke-linejoin="round"/>
<path d="M549.14 396.13 L547.24 393.83 L545.12 391.67 L542.79 389.67 L540.26 387.84 L537.54 386.18 L534.66 384.71 L531.62 383.44 L528.46 382.38 L525.19 381.53 L521.83 380.89 L518.39 380.48 L514.91 380.28 L511.40 380.32 L507.89 380.58 L504.39 381.06 L500.93 381.76 L497.53 382.68 L494.21 383.81 L490.99 385.14 L487.89 386.66 L484.93 388.38 L482.13 390.26 L479.50 392.31 L477.06 394.51 L474.83 396.85 L472.82 399.31 L471.04 401.88 L469.51 404.54 L468.23 407.27 L467.21 410.07 L466.45 412.90 L465.97 415.76 L465.76 418.62 L465.83 421.48 L466.18 424.30 L466.79 427.08 L467.68 429.79 L468.83 432.43 L470.24 434.96 L471.89 437.39 L485.77 429.98 L484.39 427.89 L483.29 425.68 L482.50 423.37 L482.01 420.99 L481.83 418.56 L481.97 416.12 L482.42 413.68 L483.18 411.27 L484.24 408.93 L485.58 406.67 L487.20 404.52 L489.08 402.50 L491.19 400.64 L493.51 398.96 L496.02 397.47 L498.68 396.20 L501.48 395.14 L504.37 394.33 L507.34 393.76 L510.33 393.45 L513.33 393.38 L516.30 393.58 L519.21 394.03 L522.02 394.73 L524.70 395.66 L527.23 396.84 L529.57 398.22 L531.71 399.82 L533.62 401.59 L535.27 403.54 Z" fill="#989cb0" stroke="#101016" stroke-width="1.45" stroke-linejoin="round"/>
<path d="M535.27 403.54 L534.05 402.06 L532.69 400.68 L531.20 399.40 L529.57 398.22 L527.83 397.16 L525.99 396.22 L524.04 395.41 L522.02 394.73 L519.92 394.18 L517.76 393.77 L515.56 393.51 L513.33 393.38 L511.08 393.41 L508.83 393.57 L506.59 393.88 L504.37 394.33 L502.19 394.92 L500.07 395.64 L498.00 396.49 L496.02 397.47 L494.12 398.57 L492.32 399.78 L490.64 401.09 L489.08 402.50 L487.65 404.00 L486.36 405.58 L485.22 407.22 L484.24 408.93 L483.42 410.68 L482.76 412.47 L482.28 414.29 L481.97 416.12 L481.84 417.95 L481.88 419.78 L482.10 421.59 L482.50 423.37 L483.06 425.11 L483.80 426.80 L484.70 428.42 L485.77 429.98 L488.88 448.51 L487.81 446.95 L486.91 445.33 L486.17 443.64 L485.61 441.90 L485.21 440.12 L484.99 438.31 L484.95 436.48 L485.08 434.65 L485.39 432.82 L485.87 431.00 L486.53 429.21 L487.35 427.46 L488.33 425.75 L489.47 424.11 L490.76 422.53 L492.19 421.03 L493.75 419.62 L495.43 418.31 L497.23 417.10 L499.13 416.00 L501.11 415.02 L503.18 414.17 L505.30 413.45 L507.48 412.86 L509.70 412.41 L511.94 412.10 L514.19 411.94 L516.44 411.91 L518.67 412.04 L520.87 412.30 L523.03 412.71 L525.13 413.26 L527.15 413.94 L529.10 414.75 L530.94 415.69 L532.68 416.75 L534.31 417.93 L535.80 419.21 L537.16 420.59 L538.38 422.07 Z" fill="url(#holeg_ct0)" stroke="#101016" stroke-width="1.45" stroke-linejoin="round"/>
<path d="M538.38 422.07 L536.73 420.12 L534.82 418.35 L532.68 416.75 L530.34 415.37 L527.81 414.19 L525.13 413.26 L522.32 412.56 L519.41 412.11 L516.44 411.91 L513.44 411.98 L510.45 412.29 L507.48 412.86 L504.59 413.67 L501.79 414.73 L499.13 416.00 L496.62 417.49 L494.30 419.17 L492.19 421.03 L490.31 423.05 L488.69 425.20 L487.35 427.46 L486.29 429.80 L485.53 432.21 L485.08 434.65 L484.94 437.09 L485.12 439.52 L485.61 441.90 L486.40 444.21 L487.50 446.42 L488.88 448.51 L500.23 516.14 L549.73 489.70 Z" fill="url(#bg)" stroke="url(#bg)" stroke-width="0.6"/>
<path d="M538.38 422.07 L536.73 420.12 L534.82 418.35 L532.68 416.75 L530.34 415.37 L527.81 414.19 L525.13 413.26 L522.32 412.56 L519.41 412.11 L516.44 411.91 L513.44 411.98 L510.45 412.29 L507.48 412.86 L504.59 413.67 L501.79 414.73 L499.13 416.00 L496.62 417.49 L494.30 419.17 L492.19 421.03 L490.31 423.05 L488.69 425.20 L487.35 427.46 L486.29 429.80 L485.53 432.21 L485.08 434.65 L484.94 437.09 L485.12 439.52 L485.61 441.90 L486.40 444.21 L487.50 446.42 L488.88 448.51" fill="none" stroke="#101016" stroke-width="1.45" stroke-linejoin="round" stroke-linecap="round"/>
<path d="M648.06 303.91 L646.17 301.62 L644.04 299.46 L641.71 297.46 L639.18 295.62 L636.46 293.97 L633.58 292.50 L630.55 291.23 L627.38 290.16 L624.11 289.31 L620.75 288.68 L617.32 288.26 L613.83 288.07 L610.33 288.11 L606.81 288.36 L603.31 288.85 L599.85 289.55 L596.45 290.47 L593.13 291.59 L589.91 292.92 L586.81 294.45 L583.85 296.16 L581.05 298.05 L578.42 300.10 L575.98 302.30 L573.75 304.64 L571.74 307.10 L569.97 309.66 L568.43 312.32 L567.15 315.06 L566.13 317.85 L565.37 320.69 L564.89 323.55 L564.68 326.41 L564.75 329.26 L565.10 332.09 L565.71 334.86 L566.60 337.58 L567.75 340.21 L569.16 342.75 L570.82 345.17 L576.88 381.31 L575.22 378.88 L573.82 376.35 L572.67 373.71 L571.78 371.00 L571.16 368.22 L570.82 365.40 L570.75 362.54 L570.96 359.68 L571.44 356.82 L572.19 353.99 L573.21 351.19 L574.50 348.46 L576.03 345.80 L577.81 343.23 L579.82 340.77 L582.05 338.43 L584.48 336.23 L587.11 334.18 L589.92 332.30 L592.88 330.58 L595.98 329.06 L599.20 327.73 L602.52 326.60 L605.92 325.68 L609.38 324.98 L612.88 324.50 L616.39 324.24 L619.90 324.20 L623.38 324.40 L626.81 324.81 L630.18 325.45 L633.45 326.30 L636.61 327.36 L639.64 328.63 L642.53 330.10 L645.24 331.76 L647.77 333.59 L650.11 335.59 L652.23 337.75 L654.12 340.05 Z" fill="url(#holeg_cu1)" stroke="#101016" stroke-width="1.45" stroke-linejoin="round"/>
<path d="M654.12 340.05 L652.23 337.75 L650.11 335.59 L647.77 333.59 L645.24 331.76 L642.53 330.10 L639.64 328.63 L636.61 327.36 L633.45 326.30 L630.18 325.45 L626.81 324.81 L623.38 324.40 L619.90 324.20 L616.39 324.24 L612.88 324.50 L609.38 324.98 L605.92 325.68 L602.52 326.60 L599.20 327.73 L595.98 329.06 L592.88 330.58 L589.92 332.30 L587.11 334.18 L584.48 336.23 L582.05 338.43 L579.82 340.77 L577.81 343.23 L576.03 345.80 L574.50 348.46 L573.21 351.19 L572.19 353.99 L571.44 356.82 L570.96 359.68 L570.75 362.54 L570.82 365.40 L571.16 368.22 L571.78 371.00 L572.67 373.71 L573.82 376.35 L575.22 378.88 L576.88 381.31 L590.75 373.90 L589.37 371.81 L588.28 369.60 L587.48 367.29 L586.99 364.91 L586.82 362.48 L586.96 360.04 L587.41 357.60 L588.17 355.19 L589.22 352.85 L590.57 350.59 L592.19 348.44 L594.06 346.42 L596.17 344.56 L598.49 342.88 L601.00 341.39 L603.67 340.12 L606.46 339.06 L609.36 338.25 L612.32 337.68 L615.32 337.37 L618.32 337.30 L621.29 337.50 L624.19 337.95 L627.00 338.65 L629.69 339.58 L632.22 340.76 L634.56 342.14 L636.70 343.74 L638.60 345.51 L640.25 347.46 Z" fill="#989cb0" stroke="#101016" stroke-width="1.45" stroke-linejoin="round"/>
<path d="M640.25 347.46 L639.04 345.98 L637.68 344.60 L636.18 343.32 L634.56 342.14 L632.82 341.08 L630.97 340.14 L629.03 339.33 L627.00 338.65 L624.91 338.10 L622.75 337.69 L620.55 337.43 L618.32 337.30 L616.07 337.33 L613.82 337.49 L611.58 337.80 L609.36 338.25 L607.18 338.84 L605.05 339.56 L602.99 340.41 L601.00 341.39 L599.10 342.49 L597.31 343.70 L595.62 345.01 L594.06 346.42 L592.63 347.92 L591.35 349.50 L590.21 351.14 L589.22 352.85 L588.40 354.60 L587.75 356.39 L587.26 358.21 L586.96 360.04 L586.82 361.87 L586.87 363.70 L587.09 365.51 L587.48 367.29 L588.05 369.03 L588.79 370.72 L589.69 372.34 L590.75 373.90 L593.86 392.43 L592.80 390.87 L591.90 389.25 L591.16 387.56 L590.59 385.82 L590.20 384.04 L589.98 382.23 L589.93 380.40 L590.07 378.57 L590.37 376.74 L590.86 374.92 L591.51 373.13 L592.33 371.38 L593.32 369.67 L594.46 368.03 L595.74 366.45 L597.17 364.95 L598.73 363.54 L600.42 362.23 L602.21 361.02 L604.11 359.92 L606.10 358.94 L608.16 358.09 L610.29 357.37 L612.47 356.78 L614.69 356.33 L616.93 356.02 L619.18 355.86 L621.43 355.83 L623.66 355.96 L625.86 356.22 L628.02 356.63 L630.11 357.18 L632.14 357.86 L634.08 358.67 L635.93 359.61 L637.67 360.67 L639.29 361.85 L640.79 363.13 L642.15 364.51 L643.36 365.99 Z" fill="url(#holeg_ct1)" stroke="#101016" stroke-width="1.45" stroke-linejoin="round"/>
<path d="M643.36 365.99 L641.71 364.04 L639.81 362.27 L637.67 360.67 L635.33 359.29 L632.80 358.11 L630.11 357.18 L627.30 356.48 L624.40 356.03 L621.43 355.83 L618.43 355.90 L615.43 356.21 L612.47 356.78 L609.57 357.59 L606.78 358.65 L604.11 359.92 L601.60 361.41 L599.28 363.09 L597.17 364.95 L595.30 366.97 L593.68 369.12 L592.33 371.38 L591.28 373.72 L590.52 376.13 L590.07 378.57 L589.93 381.01 L590.10 383.44 L590.59 385.82 L591.39 388.13 L592.48 390.34 L593.86 392.43 L605.21 460.06 L654.71 433.62 Z" fill="url(#bg)" stroke="url(#bg)" stroke-width="0.6"/>
<path d="M643.36 365.99 L641.71 364.04 L639.81 362.27 L637.67 360.67 L635.33 359.29 L632.80 358.11 L630.11 357.18 L627.30 356.48 L624.40 356.03 L621.43 355.83 L618.43 355.90 L615.43 356.21 L612.47 356.78 L609.57 357.59 L606.78 358.65 L604.11 359.92 L601.60 361.41 L599.28 363.09 L597.17 364.95 L595.30 366.97 L593.68 369.12 L592.33 371.38 L591.28 373.72 L590.52 376.13 L590.07 378.57 L589.93 381.01 L590.10 383.44 L590.59 385.82 L591.39 388.13 L592.48 390.34 L593.86 392.43" fill="none" stroke="#101016" stroke-width="1.45" stroke-linejoin="round" stroke-linecap="round"/>
<path d="M741.40 314.60 L745.50 311.50 L749.50 309.80 L756.00 309.50 L762.40 311.40 L768.10 339.70 Z" fill="#878998" stroke="#101016" stroke-width="1.45" stroke-linejoin="round"/>
<path d="M348.65 536.54 L373.13 523.46 L376.24 541.99 L351.76 555.07 Z" fill="#50525f" stroke="#101016" stroke-width="1.45" stroke-linejoin="round"/>
<path d="M405.77 506.03 L443.30 485.98 L436.40 444.84 L450.81 437.14 L446.52 411.57 L465.83 401.25 L471.89 437.39 L485.77 429.98 L488.97 449.06 L485.50 451.32 L481.66 454.98 L479.05 458.81 L478.06 461.76 L482.07 492.73 L461.76 502.37 L460.68 497.69 L457.69 499.29 L408.88 524.56 Z" fill="#50525f" stroke="#101016" stroke-width="1.45" stroke-linejoin="round"/>
<path d="M538.38 422.07 L535.27 403.54 L549.14 396.13 L543.07 359.99 L570.82 345.17 L576.88 381.31 L590.75 373.90 L593.86 392.43 Z" fill="#50525f" stroke="#101016" stroke-width="1.45" stroke-linejoin="round"/>
<path d="M643.36 365.99 L640.25 347.46 L654.12 340.05 L648.06 303.91 L669.27 292.58 L673.57 318.15 L791.06 255.39 L797.97 296.53 L835.50 276.48 L838.61 295.01 L788.17 321.14 L788.18 330.02 L768.17 339.70 L762.53 311.42 L756.43 308.62 L749.53 309.88 L741.28 313.68 Z" fill="#50525f" stroke="#101016" stroke-width="1.45" stroke-linejoin="round"/>
<path d="M868.14 259.04 L892.62 245.97 L895.73 264.50 L871.25 277.57 Z" fill="#50525f" stroke="#101016" stroke-width="1.45" stroke-linejoin="round"/>
</svg>
<svg class="abs" style="left:0;top:0" width="1011" height="62" viewBox="0 0 1011 62">
<defs>
<linearGradient id="winfill" x1="0" y1="0" x2="0" y2="1"><stop offset="0" stop-color="#f4f4f4"/><stop offset="1" stop-color="#dcdcdc"/></linearGradient>
<linearGradient id="cubeblue" x1="0" y1="0" x2="1" y2="1"><stop offset="0" stop-color="#7cc4ea"/><stop offset="1" stop-color="#3b95c8"/></linearGradient>
<linearGradient id="lightcube" x1="0" y1="0" x2="0" y2="1"><stop offset="0" stop-color="#cde6f6"/><stop offset="1" stop-color="#8ec3e4"/></linearGradient>
</defs>
<!-- 1 section view -->
<g>
<circle cx="392.4" cy="43.4" r="6.3" fill="#f4f4f4" stroke="#8a8a8a" stroke-width="1"/>
<path d="M392.4 43.4 L392.4 37.1 A6.3 6.3 0 0 0 386.1 43.4 Z" fill="#5a5a5a"/>
<path d="M392.4 43.4 L392.4 49.7 A6.3 6.3 0 0 0 398.7 43.4 Z" fill="#5a5a5a"/>
<path d="M384 43.4 L401 43.4 M392.4 35 L392.4 52" stroke="#444" stroke-width="1.1"/>
</g>
<!-- 2 twisted -->
<path d="M415 38.5 Q417 36 420.5 36 L423.5 35.5 Q424.5 42 425 47.5 Q421 50.5 418 52.5 L414.5 49.5 Q418 46 416.5 43 Z" fill="#dedede" stroke="#7a7a7a" stroke-width="0.9"/>
<path d="M420.5 36 Q418.5 42 420.5 45 Q422.5 48 418 52.5" fill="none" stroke="#8a8a8a" stroke-width="0.8"/>
<!-- 3 previous view -->
<rect x="438.5" y="35.5" width="13.5" height="10" fill="none" stroke="#333" stroke-width="1" stroke-dasharray="1.6 1.2"/>
<path d="M441 35.5 L449.5 35.5 L449.5 47.5 L445 52.5 L440.5 47.5 Z" fill="#e2e2e2" stroke="#777" stroke-width="0.9"/>
<!-- 4,5,6 windows -->
<g stroke="#4e4e4e" stroke-width="1.1">
<rect x="462.8" y="35.6" width="16.4" height="16.6" rx="1.3" fill="url(#winfill)"/>
<rect x="489.6" y="35.6" width="16" height="16.6" rx="1.3" fill="url(#winfill)"/>
<rect x="515.7" y="35.6" width="16" height="16.6" rx="1.3" fill="url(#winfill)"/>
</g>
<rect x="463.4" y="36.2" width="15.2" height="2.8" fill="#8fbfdc"/>
<rect x="490.2" y="36.2" width="14.8" height="2.8" fill="#8fbfdc"/>
<rect x="516.3" y="36.2" width="14.8" height="2.8" fill="#8fbfdc"/>
<path d="M462.8 39.2 L479.2 39.2 M489.6 39.2 L505.6 39.2 M515.7 39.2 L531.7 39.2 M489.6 45 L505.6 45 M523.5 39.2 L523.5 52.2" stroke="#4e4e4e" stroke-width="1"/>
<!-- 7 e icon -->
<g>
<path d="M540 38.5 L543 38.5 M540 41 L542.5 41 M540 43.5 L542 43.5 M540 46 L542 46 M540 48.5 L542.5 48.5 M541 51 L544 51" stroke="#555" stroke-width="1"/>
<path d="M556.5 44.5 L546.5 44.5 Q547 40 551 39.8 Q555 39.8 555.5 42.5" fill="none" stroke="#3b3b2a" stroke-width="1.4"/>
<path d="M551 37.2 Q557.5 37.3 557.8 45.2 L547 45.2 Q547.5 49.2 551.5 49.3 Q554.5 49.2 556 47.5 L557.5 49 Q555.5 51.7 551.2 51.7 Q544.3 51.5 544.2 44.5 Q544.4 37.4 551 37.2 Z" fill="#d7e0a6" stroke="#4d4d38" stroke-width="1"/>
</g>
<!-- 8 angle/laptop -->
<path d="M574 35.5 L578 34.5 L582.5 36 L582.5 49 L574 52.5 L567.5 49.5 L568 47.5 L574 45 Z" fill="#eef4f8" stroke="#6f6f6f" stroke-width="0.9"/>
<path d="M575 37 L581.5 38.5 L581.5 47 L575 45.5 Z" fill="#b7d9ee"/>
<path d="M568.5 47.8 L574.5 45.8 L581.5 47.5 L574.5 50.5 Z" fill="#9cc8e4" stroke="#6f6f6f" stroke-width="0.7"/>
<!-- 9 faded -->
<g stroke="#d2d2d2" stroke-width="1" fill="none">
<path d="M593 52 L606 52 M596 51.5 L600 37 L603 51.5 M600 37 L605 42 L609 42 L609 48 M605 42 L605 48"/>
</g>
<!-- 10 selected box w/ cube -->
<rect x="614.6" y="31.6" width="25" height="24.5" fill="#a9a8a8" stroke="#454040" stroke-width="1.4"/>
<path d="M619 39 L625 35.3 L636 37.5 L636 48.5 L629.5 52.8 L619.5 49.5 Z" fill="url(#cubeblue)" stroke="#17324a" stroke-width="1.2" stroke-linejoin="round"/>
<path d="M619 39 L629.5 41.5 L636 37.5 M629.5 41.5 L629.5 52.8" fill="none" stroke="#17324a" stroke-width="1"/>
<path d="M629.8 42 L635.6 38.3 L635.6 48.3 L629.8 52.2 Z" fill="#6ab8e2"/>
<!-- 11 light cube -->
<path d="M645.5 38 L651 34.8 L660.5 36.5 L660.5 47.5 L655 51 L645.5 48.5 Z" fill="url(#lightcube)"/>
<path d="M645.5 38 L655 40 L660.5 36.5 M655 40 L655 51" fill="none" stroke="#a9cfe6" stroke-width="0.8"/>
<!-- 12 wire cube w center -->
<g fill="none" stroke="#6a6a6a" stroke-width="1">
<path d="M671.5 39 L677 35.3 L687.5 37.5 L687.5 48.5 L681.5 52.5 L671.5 50 Z M671.5 39 L681.5 41.3 L687.5 37.5 M681.5 41.3 L681.5 52.5"/>
<path d="M677 35.3 L677 46.5 L671.5 50 M677 46.5 L687.5 48.5" stroke="#9a9a9a" stroke-dasharray="1.5 1.2" stroke-width="0.8"/>
</g>
<!-- 13 wireframe cube -->
<g fill="none" stroke="#5e5e5e" stroke-width="1">
<path d="M697 39 L702.5 35.3 L713.5 37.5 L713.5 48.5 L707.5 52.5 L697 50 Z M697 39 L707.5 41.3 L713.5 37.5 M707.5 41.3 L707.5 52.5 M702.5 35.3 L702.5 46.5 L697 50 M702.5 46.5 L713.5 48.5"/>
</g>
<!-- 14 section T -->
<path d="M722.3 37.3 L725.5 37.3 L725.5 42 L729.5 42 L729.5 45.5 L725.5 45.5 L725.5 49.8 L722.3 49.8 Z" fill="#8cc4e0" stroke="#3c5d74" stroke-width="1"/>
<path d="M740.5 37.3 L737.3 37.3 L737.3 42 L733.5 42 L733.5 45.5 L737.3 45.5 L737.3 49.8 L740.5 49.8 Z" fill="#f8f8f8" stroke="#555" stroke-width="1"/>
<path d="M731.3 35 L731.3 53" stroke="#444" stroke-width="1"/>
<!-- 15 faded -->
<g fill="none" stroke="#d6d6d6" stroke-width="1">
<path d="M749.5 38 L755 35.5 L765 37 L765 49.5 L759.5 52.5 L749.5 50 Z M755 35.5 L755 48 M759.5 38.5 L759.5 52.5 M749.5 38 L759.5 38.5 L765 37 M752 41 L752 49 M762 40 L762 50"/>
</g>
<!-- 16 two cubes -->
<path d="M774.5 37.5 L777 35.9 L782.7 36.8 L782.7 43.5 L780 45.2 L774.5 44 Z" fill="#f3dc7a" stroke="#7a6420" stroke-width="1"/>
<path d="M774.5 37.5 L780 38.5 L782.7 36.8 M780 38.5 L780 45.2" fill="none" stroke="#7a6420" stroke-width="0.8"/>
<path d="M782.5 44.2 L785 42.6 L791 43.6 L791 50.2 L788.3 51.8 L782.5 50.6 Z" fill="#a7d3ee" stroke="#2f5670" stroke-width="1"/>
<path d="M782.5 44.2 L788.3 45.3 L791 43.6 M788.3 45.3 L788.3 51.8" fill="none" stroke="#2f5670" stroke-width="0.8"/>
<path d="M784.5 40.5 L789.5 35.5 M786 41.5 L791.5 40.5 M784 40 L784.5 35.5 M775.5 47 L779.5 47.5 M776 51 L780.5 47.5 M780 48 L780.5 52" stroke="#d1656e" stroke-width="0.9"/>
<!-- 17 part w blue -->
<g transform="translate(798.8,40.2) scale(0.62)"><path d="M2.1 7.5 L5.3 6 L5.3 3.9 L10 2.1 L14.2 3.6 L14.2 8.6 L18.5 10.3 L18.5 16.7 L13.2 19.2 L2.1 12.4 Z" fill="#f0c830" stroke="#4a3a00" stroke-width="1.6" stroke-linejoin="round"/><path d="M2.1 7.5 L13.2 13.8 L18.5 10.3 M13.2 13.8 L13.2 19.2 M5.3 3.9 L9.6 5.5 L14.2 3.6 M9.6 5.5 L9.6 10.8" fill="none" stroke="#4a3a00" stroke-width="1.1"/></g>
<path d="M811.5 36.8 L814.3 35.3 L818 36.3 L818 39.5 L815.2 41 L811.5 40 Z" fill="#8cc4e0" stroke="#2c4e66" stroke-width="0.9"/>
<path d="M815.3 41.5 L815.3 46 L810 46" fill="none" stroke="#222" stroke-width="1" stroke-dasharray="1.4 1"/>
<!-- 18 faded part -->
<g transform="translate(824.8,40.2) scale(0.62)" opacity="0.35"><path d="M2.1 7.5 L5.3 6 L5.3 3.9 L10 2.1 L14.2 3.6 L14.2 8.6 L18.5 10.3 L18.5 16.7 L13.2 19.2 L2.1 12.4 Z" fill="#f4f4f4" stroke="#888" stroke-width="1.6" stroke-linejoin="round"/><path d="M2.1 7.5 L13.2 13.8 L18.5 10.3 M13.2 13.8 L13.2 19.2 M5.3 3.9 L9.6 5.5 L14.2 3.6 M9.6 5.5 L9.6 10.8" fill="none" stroke="#888" stroke-width="1.1"/></g>
<path d="M837.5 36.8 L840.3 35.3 L844 36.3 L844 39.5 L841.2 41 L837.5 40 Z" fill="#f6f6f6" stroke="#d0d0d0" stroke-width="0.9"/>
<path d="M841.3 41.5 L841.3 46 L836 46" fill="none" stroke="#d4d4d4" stroke-width="1" stroke-dasharray="1.4 1"/>
<!-- 19 faded arrows -->
<g fill="none" stroke="#cfcfcf" stroke-width="1.6">
<path d="M865 38.5 L859 38.5 M865 38.5 L865 49 L859 49"/>
<path d="M860 35.5 L856.5 38.5 L860 41.5 M860 46 L856.5 49 L860 52"/>
</g>
<path d="M878 43.6 L883.4 43.6 L880.7 46 Z" fill="#8a8a8a"/>
<!-- 21 faded beams -->
<g fill="none" stroke="#d0d0d0" stroke-width="1">
<path d="M892 35.5 L904.5 35.5 L904.5 40 L900 40 L900 42.5 L895.5 42.5 L895.5 40 L892 40 Z"/>
<path d="M892 52 L904.5 52 L904.5 47.5 L900 47.5 L900 45 L895.5 45 L895.5 47.5 L892 47.5 Z"/>
<path d="M907.5 35.5 L907.5 52.5 M905 41.5 L909.5 41.5 M905 45.5 L909.5 45.5"/>
</g>
<!-- 22 faded step -->
<path d="M918.5 48.5 L923.5 48.5 L923.5 40.5 L930 40.5 L930 48.5 L936 48.5" fill="none" stroke="#c8c8c8" stroke-width="1.3"/>
<!-- 23 arrow + plane -->
<path d="M944 47.8 L954 45 L962.2 48.5 L952 52.5 Z" fill="#8fc3e0" stroke="#4b7a98" stroke-width="0.8"/>
<path d="M953.2 38 L953.2 47.5" stroke="#3e3e3e" stroke-width="1.8"/>
<path d="M950 39.5 L953.2 35.2 L956.4 39.5 Z" fill="#3e3e3e"/>
<!-- 24 cube -->
<path d="M975.5 35.5 L988 35.5 L988 47.5 L983.5 52.5 M975.5 35.5 L970.5 40 M988 35.5 L983.5 40 M983.5 47.5 L988 47.5" fill="none" stroke="#3a3a3a" stroke-width="1"/>
<rect x="970.5" y="40" width="13" height="12.5" fill="#8fc3e0" stroke="#3d5a70" stroke-width="1.1"/>
<!-- 25 e partial -->
<path d="M997 38.5 L1000 38.5 M997 41 L999.5 41 M997 43.5 L999 43.5 M997 46 L999 46 M997 48.5 L999.5 48.5 M998 51 L1001 51" stroke="#555" stroke-width="1"/>
<path d="M1008 37.2 Q1014.5 37.3 1014.8 45.2 L1004 45.2 Q1004.5 49.2 1008.5 49.3 Q1011.5 49.2 1013 47.5 L1014.5 49 Q1012.5 51.7 1008.2 51.7 Q1001.3 51.5 1001.2 44.5 Q1001.4 37.4 1008 37.2 Z" fill="#d7e0a6" stroke="#4d4d38" stroke-width="1"/>
<path d="M1013.5 44.5 L1003.5 44.5 Q1004 40 1008 39.8 Q1012 39.8 1012.5 42.5" fill="none" stroke="#3b3b2a" stroke-width="1.4"/>
</svg>

</body></html>
